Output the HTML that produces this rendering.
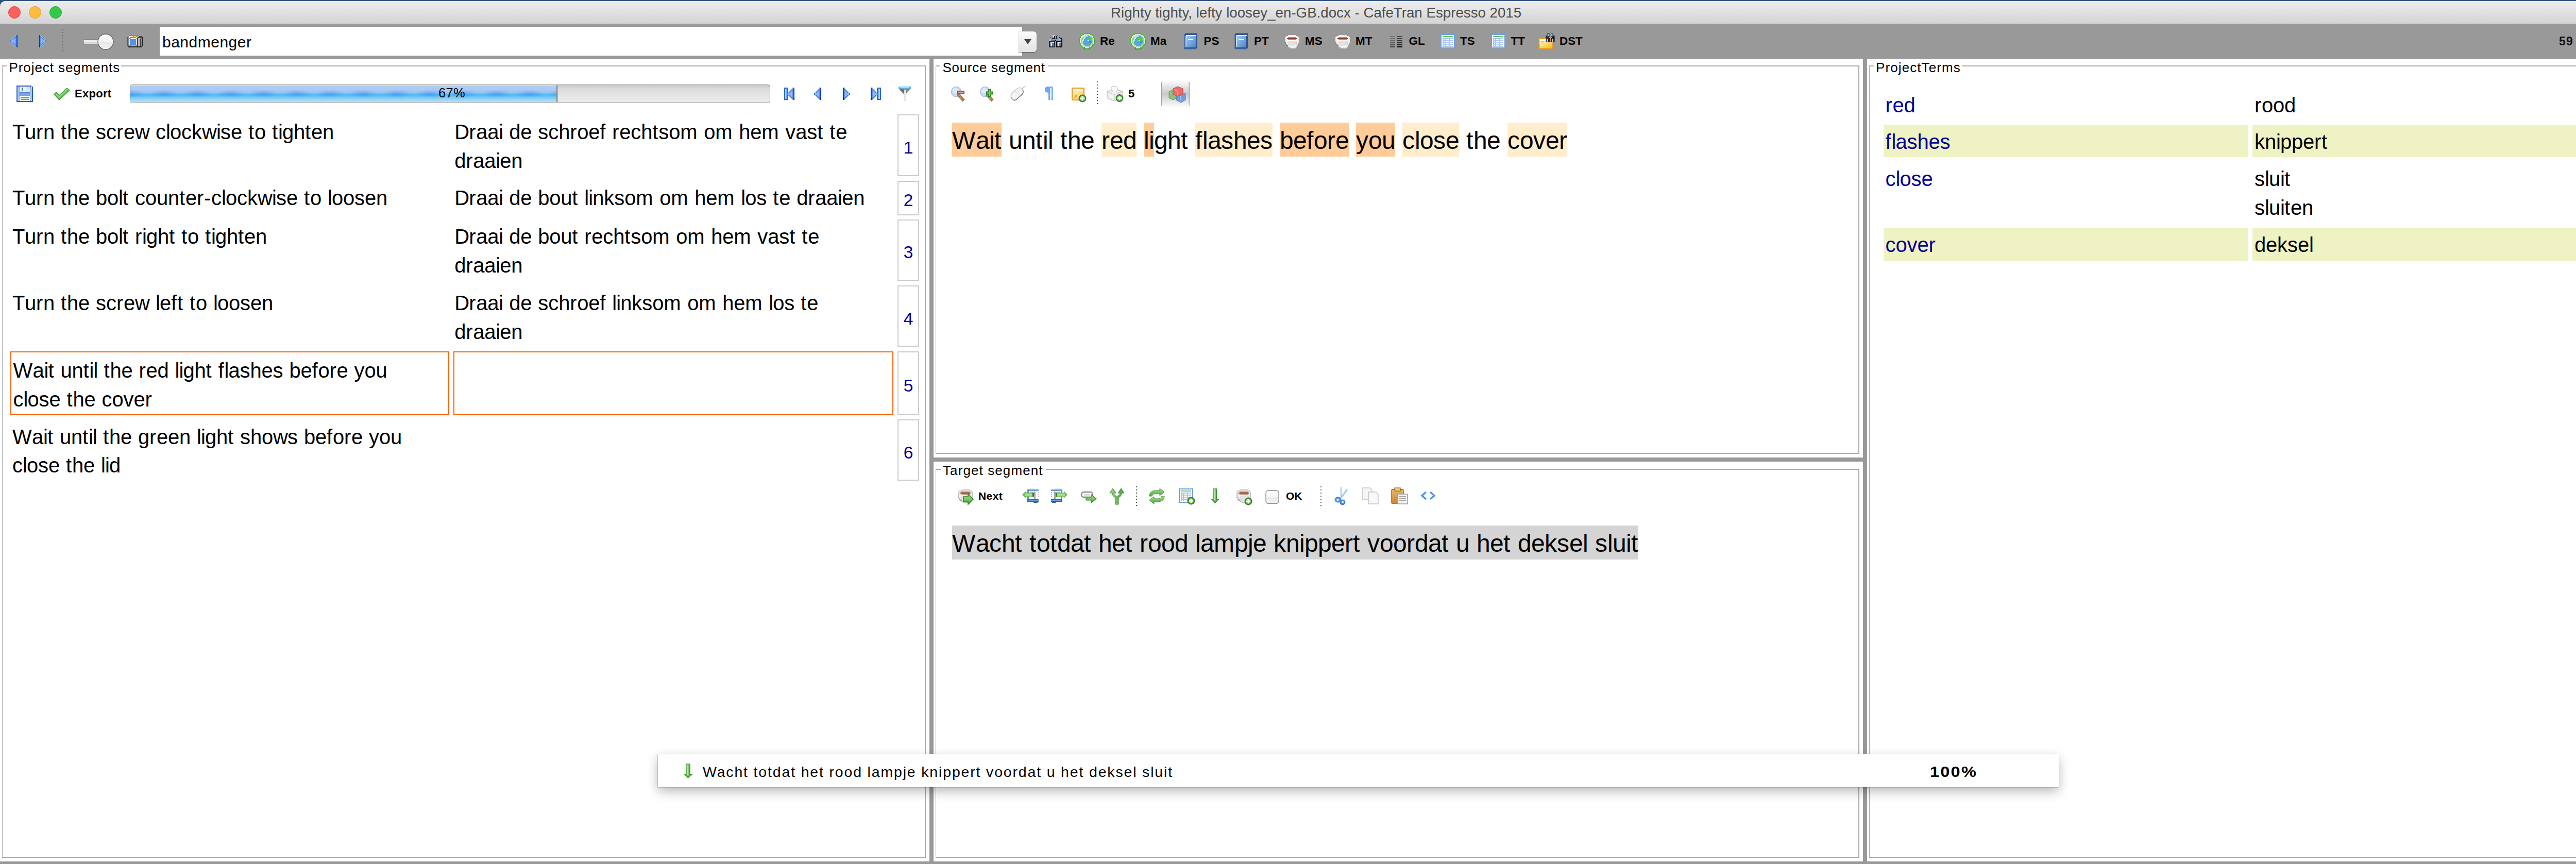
<!DOCTYPE html>
<html><head><meta charset="utf-8"><style>
html,body{margin:0;padding:0;}
body{width:5111px;height:1677px;overflow:hidden;position:relative;background:#fff;font-family:"Liberation Sans",sans-serif;color:#000;}
.t{position:absolute;white-space:pre;line-height:1;}
.t i{display:inline-block;font-style:normal;}
.r{position:absolute;}
</style></head><body>
<div class="r" style="left:0px;top:0px;width:5111px;height:12px;background:#2f4f7d;"></div>
<div class="r" style="left:0px;top:2px;width:5111px;height:44px;background:linear-gradient(#ececec,#e6e6e6 30%,#d3d3d3);border-radius:10px 10px 0 0;"></div>
<div class="r" style="left:16px;top:12px;width:22px;height:22px;border-radius:50%;background:#fc605c;border:1px solid #de4a46;"></div>
<div class="r" style="left:56px;top:12px;width:22px;height:22px;border-radius:50%;background:#fdbc40;border:1px solid #dea234;"></div>
<div class="r" style="left:96px;top:12px;width:22px;height:22px;border-radius:50%;background:#34c84a;border:1px solid #28a83a;"></div>
<div class="t" style="left:2156.0px;top:10.6px;font-size:27.7px;color:#4d4d4d;">Righty tighty, lefty loosey_en-GB.docx - CafeTran Espresso 2015</div>
<div class="r" style="left:0px;top:46px;width:5111px;height:68px;background:#999;"></div>
<div class="r" style="left:310px;top:52px;width:1674px;height:56px;background:#fff;"></div>
<div class="t" style="left:315.0px;top:67.1px;font-size:30px;letter-spacing:0.5px;">bandmenger</div>
<div class="r" style="left:1977px;top:61px;width:35px;height:40px;background:linear-gradient(#fafafa,#e4e4e4);border-radius:0 6px 6px 0;box-shadow:0 0.5px 1.5px rgba(0,0,0,.45);"></div>
<svg class="r" style="left:1988px;top:76px" width="14" height="10" viewBox="0 0 14 10"><path d="M0 0H14L7 10Z" fill="#444"/></svg>
<div class="t" style="left:2135.0px;top:69.0px;font-size:22.4px;font-weight:700;">Re</div>
<div class="t" style="left:2233.0px;top:69.0px;font-size:22.4px;font-weight:700;">Ma</div>
<div class="t" style="left:2336.5px;top:69.0px;font-size:22.4px;font-weight:700;">PS</div>
<div class="t" style="left:2434.0px;top:69.0px;font-size:22.4px;font-weight:700;">PT</div>
<div class="t" style="left:2533.0px;top:69.0px;font-size:22.4px;font-weight:700;">MS</div>
<div class="t" style="left:2631.0px;top:69.0px;font-size:22.4px;font-weight:700;">MT</div>
<div class="t" style="left:2734.6px;top:69.0px;font-size:22.4px;font-weight:700;">GL</div>
<div class="t" style="left:2834.0px;top:69.0px;font-size:22.4px;font-weight:700;">TS</div>
<div class="t" style="left:2932.5px;top:69.0px;font-size:22.4px;font-weight:700;">TT</div>
<div class="t" style="left:3027.0px;top:69.0px;font-size:22.4px;font-weight:700;">DST</div>
<div class="t" style="left:4967.0px;top:69.1px;font-size:23px;color:#111;font-weight:700;letter-spacing:1.1px;">59 | 64</div>
<div class="r" style="left:0px;top:114px;width:5111px;height:1558px;background:#fff;"></div>
<div class="r" style="left:0px;top:1672px;width:5111px;height:5px;background:#999;"></div>
<div class="r" style="left:1804px;top:114px;width:8px;height:1563px;background:#999;"></div>
<div class="r" style="left:3616px;top:114px;width:8px;height:1563px;background:#999;"></div>
<div class="r" style="left:1812px;top:888px;width:1804px;height:8px;background:#999;"></div>
<div class="r" style="left:4px;top:127px;width:1790px;height:1534px;border:2px solid #ababab;border-left-width:1px;"></div>
<div class="r" style="left:13.0px;top:126px;width:222.0px;height:4px;background:#fff;"></div>
<div class="t" style="left:17.5px;top:118.0px;font-size:26px;letter-spacing:0.92px;">Project segments</div>
<div class="r" style="left:1816px;top:127px;width:1790px;height:750px;border:2px solid #ababab;border-left-width:1px;"></div>
<div class="r" style="left:1825.0px;top:126px;width:209.0px;height:4px;background:#fff;"></div>
<div class="t" style="left:1829.5px;top:118.0px;font-size:26px;letter-spacing:0.7px;">Source segment</div>
<div class="r" style="left:1816px;top:910px;width:1790px;height:751px;border:2px solid #ababab;border-left-width:1px;"></div>
<div class="r" style="left:1825.5px;top:909px;width:204.0px;height:4px;background:#fff;"></div>
<div class="t" style="left:1830.0px;top:900.0px;font-size:26px;letter-spacing:1.1px;">Target segment</div>
<div class="r" style="left:3628px;top:127px;width:1474px;height:1534px;border:2px solid #ababab;border-left-width:1px;"></div>
<div class="r" style="left:3636.5px;top:126px;width:171.0px;height:4px;background:#fff;"></div>
<div class="t" style="left:3641.0px;top:118.0px;font-size:26px;letter-spacing:1.1px;">ProjectTerms</div>
<div class="t" style="left:145.0px;top:171.4px;font-size:22px;font-weight:700;letter-spacing:0.3px;">Export</div>
<div class="r" style="left:252px;top:164px;width:1241px;height:33.5px;border:1.5px solid #939393;border-radius:4.5px;background:linear-gradient(#c6c6c6,#dadada 20%,#e4e4e4 55%,#ececec);overflow:hidden;"><div style="position:absolute;left:0;top:0;width:828px;height:33px;background:radial-gradient(ellipse 28px 8px at 50% 52%,rgba(40,120,225,.38),rgba(40,120,225,0)) 33px 0/64.5px 100% repeat-x,linear-gradient(#d2e5fa 0,#b0cdf3 5%,#abcaf2 28%,#94c4f2 45%,#82c0f2 50%,#4ab5f3 51%,#58bef5 62%,#8ccff6 80%,#b6e2f8 100%);"></div><div style="position:absolute;left:827px;top:0;width:2.5px;height:33px;background:linear-gradient(90deg,#8a8a8a,#b5b5b5);"></div></div>
<div class="t" style="left:851.0px;top:168.4px;font-size:25.5px;letter-spacing:0.3px;">67%</div>
<div class="t" style="left:24.0px;top:235.6px;font-size:40px;"><i style="width:24px">T</i><i style="width:22px">u</i><i style="width:14px">r</i><i style="width:22px">n</i><i style="width:12px"> </i><i style="width:12px">t</i><i style="width:22px">h</i><i style="width:22px">e</i><i style="width:12px"> </i><i style="width:20px">s</i><i style="width:20px">c</i><i style="width:14px">r</i><i style="width:22px">e</i><i style="width:28px">w</i><i style="width:12px"> </i><i style="width:20px">c</i><i style="width:8px">l</i><i style="width:22px">o</i><i style="width:20px">c</i><i style="width:20px">k</i><i style="width:28px">w</i><i style="width:8px">i</i><i style="width:20px">s</i><i style="width:22px">e</i><i style="width:12px"> </i><i style="width:12px">t</i><i style="width:22px">o</i><i style="width:12px"> </i><i style="width:12px">t</i><i style="width:8px">i</i><i style="width:22px">g</i><i style="width:22px">h</i><i style="width:12px">t</i><i style="width:22px">e</i><i style="width:22px">n</i></div>
<div class="t" style="left:882.3px;top:235.6px;font-size:40px;"><i style="width:28px">D</i><i style="width:14px">r</i><i style="width:22px">a</i><i style="width:22px">a</i><i style="width:8px">i</i><i style="width:12px"> </i><i style="width:22px">d</i><i style="width:22px">e</i><i style="width:12px"> </i><i style="width:20px">s</i><i style="width:20px">c</i><i style="width:22px">h</i><i style="width:14px">r</i><i style="width:22px">o</i><i style="width:22px">e</i><i style="width:12px">f</i><i style="width:12px"> </i><i style="width:14px">r</i><i style="width:22px">e</i><i style="width:20px">c</i><i style="width:22px">h</i><i style="width:12px">t</i><i style="width:20px">s</i><i style="width:22px">o</i><i style="width:34px">m</i><i style="width:12px"> </i><i style="width:22px">o</i><i style="width:34px">m</i><i style="width:12px"> </i><i style="width:22px">h</i><i style="width:22px">e</i><i style="width:34px">m</i><i style="width:12px"> </i><i style="width:20px">v</i><i style="width:22px">a</i><i style="width:20px">s</i><i style="width:12px">t</i><i style="width:12px"> </i><i style="width:12px">t</i><i style="width:22px">e</i></div>
<div class="t" style="left:882.3px;top:291.6px;font-size:40px;"><i style="width:22px">d</i><i style="width:14px">r</i><i style="width:22px">a</i><i style="width:22px">a</i><i style="width:8px">i</i><i style="width:22px">e</i><i style="width:22px">n</i></div>
<div class="r" style="left:1742px;top:222.0px;width:38px;height:115.5px;border:2px solid #cbcbcb;"></div>
<div class="r" style="left:1742px;top:222.0px;width:42px;height:119.5px;display:flex;align-items:center;justify-content:center;"><span style="font-size:33.5px;color:#000099;position:relative;top:5px;">1</span></div>
<div class="t" style="left:24.0px;top:364.1px;font-size:40px;"><i style="width:24px">T</i><i style="width:22px">u</i><i style="width:14px">r</i><i style="width:22px">n</i><i style="width:12px"> </i><i style="width:12px">t</i><i style="width:22px">h</i><i style="width:22px">e</i><i style="width:12px"> </i><i style="width:22px">b</i><i style="width:22px">o</i><i style="width:8px">l</i><i style="width:12px">t</i><i style="width:12px"> </i><i style="width:20px">c</i><i style="width:22px">o</i><i style="width:22px">u</i><i style="width:22px">n</i><i style="width:12px">t</i><i style="width:22px">e</i><i style="width:14px">r</i><i style="width:14px">-</i><i style="width:20px">c</i><i style="width:8px">l</i><i style="width:22px">o</i><i style="width:20px">c</i><i style="width:20px">k</i><i style="width:28px">w</i><i style="width:8px">i</i><i style="width:20px">s</i><i style="width:22px">e</i><i style="width:12px"> </i><i style="width:12px">t</i><i style="width:22px">o</i><i style="width:12px"> </i><i style="width:8px">l</i><i style="width:22px">o</i><i style="width:22px">o</i><i style="width:20px">s</i><i style="width:22px">e</i><i style="width:22px">n</i></div>
<div class="t" style="left:882.3px;top:364.1px;font-size:40px;"><i style="width:28px">D</i><i style="width:14px">r</i><i style="width:22px">a</i><i style="width:22px">a</i><i style="width:8px">i</i><i style="width:12px"> </i><i style="width:22px">d</i><i style="width:22px">e</i><i style="width:12px"> </i><i style="width:22px">b</i><i style="width:22px">o</i><i style="width:22px">u</i><i style="width:12px">t</i><i style="width:12px"> </i><i style="width:8px">l</i><i style="width:8px">i</i><i style="width:22px">n</i><i style="width:20px">k</i><i style="width:20px">s</i><i style="width:22px">o</i><i style="width:34px">m</i><i style="width:12px"> </i><i style="width:22px">o</i><i style="width:34px">m</i><i style="width:12px"> </i><i style="width:22px">h</i><i style="width:22px">e</i><i style="width:34px">m</i><i style="width:12px"> </i><i style="width:8px">l</i><i style="width:22px">o</i><i style="width:20px">s</i><i style="width:12px"> </i><i style="width:12px">t</i><i style="width:22px">e</i><i style="width:12px"> </i><i style="width:22px">d</i><i style="width:14px">r</i><i style="width:22px">a</i><i style="width:22px">a</i><i style="width:8px">i</i><i style="width:22px">e</i><i style="width:22px">n</i></div>
<div class="r" style="left:1742px;top:350.5px;width:38px;height:63.0px;border:2px solid #cbcbcb;"></div>
<div class="r" style="left:1742px;top:350.5px;width:42px;height:67.0px;display:flex;align-items:center;justify-content:center;"><span style="font-size:33.5px;color:#000099;position:relative;top:5px;">2</span></div>
<div class="t" style="left:24.0px;top:439.2px;font-size:40px;"><i style="width:24px">T</i><i style="width:22px">u</i><i style="width:14px">r</i><i style="width:22px">n</i><i style="width:12px"> </i><i style="width:12px">t</i><i style="width:22px">h</i><i style="width:22px">e</i><i style="width:12px"> </i><i style="width:22px">b</i><i style="width:22px">o</i><i style="width:8px">l</i><i style="width:12px">t</i><i style="width:12px"> </i><i style="width:14px">r</i><i style="width:8px">i</i><i style="width:22px">g</i><i style="width:22px">h</i><i style="width:12px">t</i><i style="width:12px"> </i><i style="width:12px">t</i><i style="width:22px">o</i><i style="width:12px"> </i><i style="width:12px">t</i><i style="width:8px">i</i><i style="width:22px">g</i><i style="width:22px">h</i><i style="width:12px">t</i><i style="width:22px">e</i><i style="width:22px">n</i></div>
<div class="t" style="left:882.3px;top:439.2px;font-size:40px;"><i style="width:28px">D</i><i style="width:14px">r</i><i style="width:22px">a</i><i style="width:22px">a</i><i style="width:8px">i</i><i style="width:12px"> </i><i style="width:22px">d</i><i style="width:22px">e</i><i style="width:12px"> </i><i style="width:22px">b</i><i style="width:22px">o</i><i style="width:22px">u</i><i style="width:12px">t</i><i style="width:12px"> </i><i style="width:14px">r</i><i style="width:22px">e</i><i style="width:20px">c</i><i style="width:22px">h</i><i style="width:12px">t</i><i style="width:20px">s</i><i style="width:22px">o</i><i style="width:34px">m</i><i style="width:12px"> </i><i style="width:22px">o</i><i style="width:34px">m</i><i style="width:12px"> </i><i style="width:22px">h</i><i style="width:22px">e</i><i style="width:34px">m</i><i style="width:12px"> </i><i style="width:20px">v</i><i style="width:22px">a</i><i style="width:20px">s</i><i style="width:12px">t</i><i style="width:12px"> </i><i style="width:12px">t</i><i style="width:22px">e</i></div>
<div class="t" style="left:882.3px;top:495.2px;font-size:40px;"><i style="width:22px">d</i><i style="width:14px">r</i><i style="width:22px">a</i><i style="width:22px">a</i><i style="width:8px">i</i><i style="width:22px">e</i><i style="width:22px">n</i></div>
<div class="r" style="left:1742px;top:425.6px;width:38px;height:115.0px;border:2px solid #cbcbcb;"></div>
<div class="r" style="left:1742px;top:425.6px;width:42px;height:119.0px;display:flex;align-items:center;justify-content:center;"><span style="font-size:33.5px;color:#000099;position:relative;top:5px;">3</span></div>
<div class="t" style="left:24.0px;top:567.9px;font-size:40px;"><i style="width:24px">T</i><i style="width:22px">u</i><i style="width:14px">r</i><i style="width:22px">n</i><i style="width:12px"> </i><i style="width:12px">t</i><i style="width:22px">h</i><i style="width:22px">e</i><i style="width:12px"> </i><i style="width:20px">s</i><i style="width:20px">c</i><i style="width:14px">r</i><i style="width:22px">e</i><i style="width:28px">w</i><i style="width:12px"> </i><i style="width:8px">l</i><i style="width:22px">e</i><i style="width:12px">f</i><i style="width:12px">t</i><i style="width:12px"> </i><i style="width:12px">t</i><i style="width:22px">o</i><i style="width:12px"> </i><i style="width:8px">l</i><i style="width:22px">o</i><i style="width:22px">o</i><i style="width:20px">s</i><i style="width:22px">e</i><i style="width:22px">n</i></div>
<div class="t" style="left:882.3px;top:567.9px;font-size:40px;"><i style="width:28px">D</i><i style="width:14px">r</i><i style="width:22px">a</i><i style="width:22px">a</i><i style="width:8px">i</i><i style="width:12px"> </i><i style="width:22px">d</i><i style="width:22px">e</i><i style="width:12px"> </i><i style="width:20px">s</i><i style="width:20px">c</i><i style="width:22px">h</i><i style="width:14px">r</i><i style="width:22px">o</i><i style="width:22px">e</i><i style="width:12px">f</i><i style="width:12px"> </i><i style="width:8px">l</i><i style="width:8px">i</i><i style="width:22px">n</i><i style="width:20px">k</i><i style="width:20px">s</i><i style="width:22px">o</i><i style="width:34px">m</i><i style="width:12px"> </i><i style="width:22px">o</i><i style="width:34px">m</i><i style="width:12px"> </i><i style="width:22px">h</i><i style="width:22px">e</i><i style="width:34px">m</i><i style="width:12px"> </i><i style="width:8px">l</i><i style="width:22px">o</i><i style="width:20px">s</i><i style="width:12px"> </i><i style="width:12px">t</i><i style="width:22px">e</i></div>
<div class="t" style="left:882.3px;top:623.9px;font-size:40px;"><i style="width:22px">d</i><i style="width:14px">r</i><i style="width:22px">a</i><i style="width:22px">a</i><i style="width:8px">i</i><i style="width:22px">e</i><i style="width:22px">n</i></div>
<div class="r" style="left:1742px;top:554.3px;width:38px;height:115.0px;border:2px solid #cbcbcb;"></div>
<div class="r" style="left:1742px;top:554.3px;width:42px;height:119.0px;display:flex;align-items:center;justify-content:center;"><span style="font-size:33.5px;color:#000099;position:relative;top:5px;">4</span></div>
<div class="t" style="left:25.6px;top:699.1px;font-size:40px;"><i style="width:38px">W</i><i style="width:22px">a</i><i style="width:8px">i</i><i style="width:12px">t</i><i style="width:12px"> </i><i style="width:22px">u</i><i style="width:22px">n</i><i style="width:12px">t</i><i style="width:8px">i</i><i style="width:8px">l</i><i style="width:12px"> </i><i style="width:12px">t</i><i style="width:22px">h</i><i style="width:22px">e</i><i style="width:12px"> </i><i style="width:14px">r</i><i style="width:22px">e</i><i style="width:22px">d</i><i style="width:12px"> </i><i style="width:8px">l</i><i style="width:8px">i</i><i style="width:22px">g</i><i style="width:22px">h</i><i style="width:12px">t</i><i style="width:12px"> </i><i style="width:12px">f</i><i style="width:8px">l</i><i style="width:22px">a</i><i style="width:20px">s</i><i style="width:22px">h</i><i style="width:22px">e</i><i style="width:20px">s</i><i style="width:12px"> </i><i style="width:22px">b</i><i style="width:22px">e</i><i style="width:12px">f</i><i style="width:22px">o</i><i style="width:14px">r</i><i style="width:22px">e</i><i style="width:12px"> </i><i style="width:20px">y</i><i style="width:22px">o</i><i style="width:22px">u</i></div>
<div class="t" style="left:25.6px;top:754.6px;font-size:40px;"><i style="width:20px">c</i><i style="width:8px">l</i><i style="width:22px">o</i><i style="width:20px">s</i><i style="width:22px">e</i><i style="width:12px"> </i><i style="width:12px">t</i><i style="width:22px">h</i><i style="width:22px">e</i><i style="width:12px"> </i><i style="width:20px">c</i><i style="width:22px">o</i><i style="width:20px">v</i><i style="width:22px">e</i><i style="width:14px">r</i></div>
<div class="r" style="left:1742px;top:682.0px;width:38px;height:119.4px;border:2px solid #cbcbcb;"></div>
<div class="r" style="left:1742px;top:682.0px;width:42px;height:123.4px;display:flex;align-items:center;justify-content:center;"><span style="font-size:33.5px;color:#000099;position:relative;top:5px;">5</span></div>
<div class="r" style="left:20px;top:682px;width:852px;height:123.5px;border:2px solid #ff6209;box-sizing:border-box;"></div>
<div class="r" style="left:880px;top:682px;width:854px;height:123.5px;border:2px solid #ff6209;box-sizing:border-box;"></div>
<div class="t" style="left:24.0px;top:827.9px;font-size:40px;"><i style="width:38px">W</i><i style="width:22px">a</i><i style="width:8px">i</i><i style="width:12px">t</i><i style="width:12px"> </i><i style="width:22px">u</i><i style="width:22px">n</i><i style="width:12px">t</i><i style="width:8px">i</i><i style="width:8px">l</i><i style="width:12px"> </i><i style="width:12px">t</i><i style="width:22px">h</i><i style="width:22px">e</i><i style="width:12px"> </i><i style="width:22px">g</i><i style="width:14px">r</i><i style="width:22px">e</i><i style="width:22px">e</i><i style="width:22px">n</i><i style="width:12px"> </i><i style="width:8px">l</i><i style="width:8px">i</i><i style="width:22px">g</i><i style="width:22px">h</i><i style="width:12px">t</i><i style="width:12px"> </i><i style="width:20px">s</i><i style="width:22px">h</i><i style="width:22px">o</i><i style="width:28px">w</i><i style="width:20px">s</i><i style="width:12px"> </i><i style="width:22px">b</i><i style="width:22px">e</i><i style="width:12px">f</i><i style="width:22px">o</i><i style="width:14px">r</i><i style="width:22px">e</i><i style="width:12px"> </i><i style="width:20px">y</i><i style="width:22px">o</i><i style="width:22px">u</i></div>
<div class="t" style="left:24.0px;top:883.4px;font-size:40px;"><i style="width:20px">c</i><i style="width:8px">l</i><i style="width:22px">o</i><i style="width:20px">s</i><i style="width:22px">e</i><i style="width:12px"> </i><i style="width:12px">t</i><i style="width:22px">h</i><i style="width:22px">e</i><i style="width:12px"> </i><i style="width:8px">l</i><i style="width:8px">i</i><i style="width:22px">d</i></div>
<div class="r" style="left:1742px;top:814.3px;width:38px;height:115.0px;border:2px solid #cbcbcb;"></div>
<div class="r" style="left:1742px;top:814.3px;width:42px;height:119.0px;display:flex;align-items:center;justify-content:center;"><span style="font-size:33.5px;color:#000099;position:relative;top:5px;">6</span></div>
<div class="r" style="left:1848px;top:238px;width:96px;height:66px;background:#ffcc99;"></div>
<div class="r" style="left:2138px;top:238px;width:68px;height:66px;background:#ffedcc;"></div>
<div class="r" style="left:2220px;top:238px;width:20px;height:66px;background:#ffcc99;"></div>
<div class="r" style="left:2320px;top:238px;width:150px;height:66px;background:#ffedcc;"></div>
<div class="r" style="left:2484px;top:238px;width:134px;height:66px;background:#ffcc99;"></div>
<div class="r" style="left:2632px;top:238px;width:76px;height:66px;background:#ffcc99;"></div>
<div class="r" style="left:2722px;top:238px;width:110px;height:66px;background:#ffedcc;"></div>
<div class="r" style="left:2926px;top:238px;width:116px;height:66px;background:#ffedcc;"></div>
<div class="t" style="left:1848.0px;top:249.4px;font-size:48px;"><i style="width:46px">W</i><i style="width:26px">a</i><i style="width:10px">i</i><i style="width:14px">t</i><i style="width:14px"> </i><i style="width:26px">u</i><i style="width:26px">n</i><i style="width:14px">t</i><i style="width:10px">i</i><i style="width:10px">l</i><i style="width:14px"> </i><i style="width:14px">t</i><i style="width:26px">h</i><i style="width:26px">e</i><i style="width:14px"> </i><i style="width:16px">r</i><i style="width:26px">e</i><i style="width:26px">d</i><i style="width:14px"> </i><i style="width:10px">l</i><i style="width:10px">i</i><i style="width:26px">g</i><i style="width:26px">h</i><i style="width:14px">t</i><i style="width:14px"> </i><i style="width:14px">f</i><i style="width:10px">l</i><i style="width:26px">a</i><i style="width:24px">s</i><i style="width:26px">h</i><i style="width:26px">e</i><i style="width:24px">s</i><i style="width:14px"> </i><i style="width:26px">b</i><i style="width:26px">e</i><i style="width:14px">f</i><i style="width:26px">o</i><i style="width:16px">r</i><i style="width:26px">e</i><i style="width:14px"> </i><i style="width:24px">y</i><i style="width:26px">o</i><i style="width:26px">u</i><i style="width:14px"> </i><i style="width:24px">c</i><i style="width:10px">l</i><i style="width:26px">o</i><i style="width:24px">s</i><i style="width:26px">e</i><i style="width:14px"> </i><i style="width:14px">t</i><i style="width:26px">h</i><i style="width:26px">e</i><i style="width:14px"> </i><i style="width:24px">c</i><i style="width:26px">o</i><i style="width:24px">v</i><i style="width:26px">e</i><i style="width:16px">r</i></div>
<div class="t" style="left:2190.0px;top:171.0px;font-size:22px;font-weight:700;">5</div>
<div class="r" style="left:2254px;top:155px;width:55px;height:53px;background:linear-gradient(90deg,#b0b0b0,#dedede 15%,#e4e4e4 50%,#dedede 85%,#b0b0b0);"></div>
<div class="t" style="left:1899.0px;top:952.2px;font-size:21px;font-weight:700;letter-spacing:0.4px;">Next</div>
<div class="t" style="left:2496.0px;top:952.2px;font-size:21px;font-weight:700;">OK</div>
<div class="r" style="left:1848px;top:1020px;width:1332px;height:66px;background:#d4d4d4;"></div>
<div class="t" style="left:1848.0px;top:1031.4px;font-size:48px;"><i style="width:46px">W</i><i style="width:26px">a</i><i style="width:24px">c</i><i style="width:26px">h</i><i style="width:14px">t</i><i style="width:14px"> </i><i style="width:14px">t</i><i style="width:26px">o</i><i style="width:14px">t</i><i style="width:26px">d</i><i style="width:26px">a</i><i style="width:14px">t</i><i style="width:14px"> </i><i style="width:26px">h</i><i style="width:26px">e</i><i style="width:14px">t</i><i style="width:14px"> </i><i style="width:16px">r</i><i style="width:26px">o</i><i style="width:26px">o</i><i style="width:26px">d</i><i style="width:14px"> </i><i style="width:10px">l</i><i style="width:26px">a</i><i style="width:40px">m</i><i style="width:26px">p</i><i style="width:10px">j</i><i style="width:26px">e</i><i style="width:14px"> </i><i style="width:24px">k</i><i style="width:26px">n</i><i style="width:10px">i</i><i style="width:26px">p</i><i style="width:26px">p</i><i style="width:26px">e</i><i style="width:16px">r</i><i style="width:14px">t</i><i style="width:14px"> </i><i style="width:24px">v</i><i style="width:26px">o</i><i style="width:26px">o</i><i style="width:16px">r</i><i style="width:26px">d</i><i style="width:26px">a</i><i style="width:14px">t</i><i style="width:14px"> </i><i style="width:26px">u</i><i style="width:14px"> </i><i style="width:26px">h</i><i style="width:26px">e</i><i style="width:14px">t</i><i style="width:14px"> </i><i style="width:26px">d</i><i style="width:26px">e</i><i style="width:24px">k</i><i style="width:24px">s</i><i style="width:26px">e</i><i style="width:10px">l</i><i style="width:14px"> </i><i style="width:24px">s</i><i style="width:10px">l</i><i style="width:26px">u</i><i style="width:10px">i</i><i style="width:14px">t</i></div>
<div class="t" style="left:3659.5px;top:183.6px;font-size:40px;color:#000099;"><i style="width:14px">r</i><i style="width:22px">e</i><i style="width:22px">d</i></div>
<div class="t" style="left:4376.0px;top:183.6px;font-size:40px;"><i style="width:14px">r</i><i style="width:22px">o</i><i style="width:22px">o</i><i style="width:22px">d</i></div>
<div class="r" style="left:3656px;top:241.7px;width:707.5px;height:63.5px;background:#eff2c2;"></div>
<div class="r" style="left:4372px;top:241.7px;width:708px;height:63.5px;background:#eff2c2;"></div>
<div class="t" style="left:3659.5px;top:254.8px;font-size:40px;color:#000099;"><i style="width:12px">f</i><i style="width:8px">l</i><i style="width:22px">a</i><i style="width:20px">s</i><i style="width:22px">h</i><i style="width:22px">e</i><i style="width:20px">s</i></div>
<div class="t" style="left:4376.0px;top:254.8px;font-size:40px;"><i style="width:20px">k</i><i style="width:22px">n</i><i style="width:8px">i</i><i style="width:22px">p</i><i style="width:22px">p</i><i style="width:22px">e</i><i style="width:14px">r</i><i style="width:12px">t</i></div>
<div class="t" style="left:3659.5px;top:327.1px;font-size:40px;color:#000099;"><i style="width:20px">c</i><i style="width:8px">l</i><i style="width:22px">o</i><i style="width:20px">s</i><i style="width:22px">e</i></div>
<div class="t" style="left:4376.0px;top:327.1px;font-size:40px;"><i style="width:20px">s</i><i style="width:8px">l</i><i style="width:22px">u</i><i style="width:8px">i</i><i style="width:12px">t</i></div>
<div class="t" style="left:4376.0px;top:383.1px;font-size:40px;"><i style="width:20px">s</i><i style="width:8px">l</i><i style="width:22px">u</i><i style="width:8px">i</i><i style="width:12px">t</i><i style="width:22px">e</i><i style="width:22px">n</i></div>
<div class="r" style="left:3656px;top:442px;width:707.5px;height:63.5px;background:#eff2c2;"></div>
<div class="r" style="left:4372px;top:442px;width:708px;height:63.5px;background:#eff2c2;"></div>
<div class="t" style="left:3659.5px;top:455.1px;font-size:40px;color:#000099;"><i style="width:20px">c</i><i style="width:22px">o</i><i style="width:20px">v</i><i style="width:22px">e</i><i style="width:14px">r</i></div>
<div class="t" style="left:4376.0px;top:455.1px;font-size:40px;"><i style="width:22px">d</i><i style="width:22px">e</i><i style="width:20px">k</i><i style="width:20px">s</i><i style="width:22px">e</i><i style="width:8px">l</i></div>
<div class="r" style="left:1277px;top:1463.5px;width:2719px;height:64.5px;background:#fff;box-shadow:0 0 0 0.7px rgba(0,0,0,.22),0 8px 22px rgba(0,0,0,.28);"></div>
<div class="t" style="left:1364.0px;top:1483.5px;font-size:28.5px;letter-spacing:1.83px;">Wacht totdat het rood lampje knippert voordat u het deksel sluit</div>
<div class="t" style="left:3746.0px;top:1484.0px;font-size:29px;font-weight:700;letter-spacing:2px;transform:scaleX(1.12);transform-origin:0 0;">100%</div>
<svg width="0" height="0" style="position:absolute"><defs>
<linearGradient id="gBlueTri" x1="0" y1="0" x2="1" y2="0"><stop offset="0" stop-color="#a9c8f5"/><stop offset="1" stop-color="#5b8ee6"/></linearGradient>
<linearGradient id="gBook" x1="0" y1="0" x2="1" y2="1"><stop offset="0" stop-color="#a9cdee"/><stop offset="1" stop-color="#4a86c8"/></linearGradient>
<radialGradient id="gGlobe" cx="0.4" cy="0.35" r="0.7"><stop offset="0" stop-color="#d8f5c8"/><stop offset="0.5" stop-color="#6fd06a"/><stop offset="1" stop-color="#3aa83a"/></radialGradient>
<linearGradient id="gKnob" x1="0" y1="0" x2="0" y2="1"><stop offset="0" stop-color="#ffffff"/><stop offset="0.5" stop-color="#f4f4f4"/><stop offset="0.55" stop-color="#e9e9e9"/><stop offset="1" stop-color="#f2f2f2"/></linearGradient>
<linearGradient id="gSticky" x1="0" y1="0" x2="1" y2="1"><stop offset="0" stop-color="#fff6c8"/><stop offset="1" stop-color="#f5cf3c"/></linearGradient>
<linearGradient id="gFolder" x1="0" y1="0" x2="1" y2="1"><stop offset="0" stop-color="#fff3b0"/><stop offset="1" stop-color="#f0c000"/></linearGradient>
<linearGradient id="gGreenArrow" x1="0" y1="0" x2="0" y2="1"><stop offset="0" stop-color="#a8dc98"/><stop offset="1" stop-color="#4ea83c"/></linearGradient>
<linearGradient id="gGreenV" x1="0" y1="0" x2="1" y2="0"><stop offset="0" stop-color="#9fd58e"/><stop offset="1" stop-color="#4a9e3a"/></linearGradient>
<linearGradient id="gClip" x1="0" y1="0" x2="0" y2="1"><stop offset="0" stop-color="#e7b86a"/><stop offset="1" stop-color="#c98634"/></linearGradient>
<linearGradient id="gCheckbox" x1="0" y1="0" x2="0" y2="1"><stop offset="0" stop-color="#ffffff"/><stop offset="0.5" stop-color="#f6f6f6"/><stop offset="0.52" stop-color="#ebebeb"/><stop offset="1" stop-color="#f3f3f3"/></linearGradient>
<linearGradient id="gCubeBtn" x1="0" y1="0" x2="0" y2="1"><stop offset="0" stop-color="#ffffff"/><stop offset="0.5" stop-color="#c9c9c9"/><stop offset="1" stop-color="#ffffff"/></linearGradient>
</defs></svg>
<svg class="r" style="left:20px;top:68px" width="14" height="24" viewBox="0 0 7 12" shape-rendering="crispEdges"><rect x="5" y="0" width="1" height="1" fill="#94b7ef"/><rect x="6" y="0" width="1" height="1" fill="#0b3cc9"/><rect x="4" y="1" width="1" height="1" fill="#94b7ef"/><rect x="5" y="1" width="1" height="1" fill="#4382e4"/><rect x="6" y="1" width="1" height="1" fill="#0b3cc9"/><rect x="3" y="2" width="1" height="1" fill="#94b7ef"/><rect x="4" y="2" width="1" height="1" fill="#4382e4"/><rect x="5" y="2" width="1" height="1" fill="#5b95ea"/><rect x="6" y="2" width="1" height="1" fill="#0b3cc9"/><rect x="2" y="3" width="1" height="1" fill="#94b7ef"/><rect x="3" y="3" width="1" height="1" fill="#4382e4"/><rect x="4" y="3" width="1" height="1" fill="#8fb3ee"/><rect x="5" y="3" width="1" height="1" fill="#5b95ea"/><rect x="6" y="3" width="1" height="1" fill="#0b3cc9"/><rect x="1" y="4" width="1" height="1" fill="#94b7ef"/><rect x="2" y="4" width="1" height="1" fill="#4382e4"/><rect x="3" y="4" width="2" height="1" fill="#8fb3ee"/><rect x="5" y="4" width="1" height="1" fill="#5b95ea"/><rect x="6" y="4" width="1" height="1" fill="#0b3cc9"/><rect x="0" y="5" width="1" height="1" fill="#4382e4"/><rect x="1" y="5" width="4" height="1" fill="#8fb3ee"/><rect x="5" y="5" width="1" height="1" fill="#5b95ea"/><rect x="6" y="5" width="1" height="1" fill="#0b3cc9"/><rect x="0" y="6" width="1" height="1" fill="#4382e4"/><rect x="1" y="6" width="4" height="1" fill="#8fb3ee"/><rect x="5" y="6" width="1" height="1" fill="#5b95ea"/><rect x="6" y="6" width="1" height="1" fill="#0b3cc9"/><rect x="1" y="7" width="1" height="1" fill="#94b7ef"/><rect x="2" y="7" width="1" height="1" fill="#4382e4"/><rect x="3" y="7" width="2" height="1" fill="#8fb3ee"/><rect x="5" y="7" width="1" height="1" fill="#5b95ea"/><rect x="6" y="7" width="1" height="1" fill="#0b3cc9"/><rect x="2" y="8" width="1" height="1" fill="#94b7ef"/><rect x="3" y="8" width="1" height="1" fill="#4382e4"/><rect x="4" y="8" width="1" height="1" fill="#8fb3ee"/><rect x="5" y="8" width="1" height="1" fill="#5b95ea"/><rect x="6" y="8" width="1" height="1" fill="#0b3cc9"/><rect x="3" y="9" width="1" height="1" fill="#94b7ef"/><rect x="4" y="9" width="1" height="1" fill="#4382e4"/><rect x="5" y="9" width="1" height="1" fill="#5b95ea"/><rect x="6" y="9" width="1" height="1" fill="#0b3cc9"/><rect x="4" y="10" width="1" height="1" fill="#94b7ef"/><rect x="5" y="10" width="1" height="1" fill="#4382e4"/><rect x="6" y="10" width="1" height="1" fill="#0022b2"/><rect x="5" y="11" width="1" height="1" fill="#94b7ef"/><rect x="6" y="11" width="1" height="1" fill="#0022b2"/></svg>
<svg class="r" style="left:76px;top:68px" width="14" height="24" viewBox="0 0 7 12" shape-rendering="crispEdges"><rect x="0" y="0" width="1" height="1" fill="#0b3cc9"/><rect x="1" y="0" width="1" height="1" fill="#94b7ef"/><rect x="0" y="1" width="1" height="1" fill="#0b3cc9"/><rect x="1" y="1" width="1" height="1" fill="#4382e4"/><rect x="2" y="1" width="1" height="1" fill="#94b7ef"/><rect x="0" y="2" width="1" height="1" fill="#0b3cc9"/><rect x="1" y="2" width="1" height="1" fill="#5b95ea"/><rect x="2" y="2" width="1" height="1" fill="#4382e4"/><rect x="3" y="2" width="1" height="1" fill="#94b7ef"/><rect x="0" y="3" width="1" height="1" fill="#0b3cc9"/><rect x="1" y="3" width="1" height="1" fill="#5b95ea"/><rect x="2" y="3" width="1" height="1" fill="#8fb3ee"/><rect x="3" y="3" width="1" height="1" fill="#4382e4"/><rect x="4" y="3" width="1" height="1" fill="#94b7ef"/><rect x="0" y="4" width="1" height="1" fill="#0b3cc9"/><rect x="1" y="4" width="1" height="1" fill="#5b95ea"/><rect x="2" y="4" width="2" height="1" fill="#8fb3ee"/><rect x="4" y="4" width="1" height="1" fill="#4382e4"/><rect x="5" y="4" width="1" height="1" fill="#94b7ef"/><rect x="0" y="5" width="1" height="1" fill="#0b3cc9"/><rect x="1" y="5" width="1" height="1" fill="#5b95ea"/><rect x="2" y="5" width="4" height="1" fill="#8fb3ee"/><rect x="6" y="5" width="1" height="1" fill="#4382e4"/><rect x="0" y="6" width="1" height="1" fill="#0b3cc9"/><rect x="1" y="6" width="1" height="1" fill="#5b95ea"/><rect x="2" y="6" width="4" height="1" fill="#8fb3ee"/><rect x="6" y="6" width="1" height="1" fill="#4382e4"/><rect x="0" y="7" width="1" height="1" fill="#0b3cc9"/><rect x="1" y="7" width="1" height="1" fill="#5b95ea"/><rect x="2" y="7" width="2" height="1" fill="#8fb3ee"/><rect x="4" y="7" width="1" height="1" fill="#4382e4"/><rect x="5" y="7" width="1" height="1" fill="#94b7ef"/><rect x="0" y="8" width="1" height="1" fill="#0b3cc9"/><rect x="1" y="8" width="1" height="1" fill="#5b95ea"/><rect x="2" y="8" width="1" height="1" fill="#8fb3ee"/><rect x="3" y="8" width="1" height="1" fill="#4382e4"/><rect x="4" y="8" width="1" height="1" fill="#94b7ef"/><rect x="0" y="9" width="1" height="1" fill="#0b3cc9"/><rect x="1" y="9" width="1" height="1" fill="#5b95ea"/><rect x="2" y="9" width="1" height="1" fill="#4382e4"/><rect x="3" y="9" width="1" height="1" fill="#94b7ef"/><rect x="0" y="10" width="1" height="1" fill="#0022b2"/><rect x="1" y="10" width="1" height="1" fill="#4382e4"/><rect x="2" y="10" width="1" height="1" fill="#94b7ef"/><rect x="0" y="11" width="1" height="1" fill="#0022b2"/><rect x="1" y="11" width="1" height="1" fill="#94b7ef"/></svg>
<svg class="r" style="left:121px;top:56px;overflow:visible" width="2" height="45" viewBox="0 0 2 45"><rect x="0" y="0" width="2" height="2" fill="#6e6e6e"/><rect x="0" y="6" width="2" height="2" fill="#6e6e6e"/><rect x="0" y="12" width="2" height="2" fill="#6e6e6e"/><rect x="0" y="18" width="2" height="2" fill="#6e6e6e"/><rect x="0" y="24" width="2" height="2" fill="#6e6e6e"/><rect x="0" y="30" width="2" height="2" fill="#6e6e6e"/><rect x="0" y="36" width="2" height="2" fill="#6e6e6e"/><rect x="0" y="42" width="2" height="2" fill="#6e6e6e"/></svg>
<svg class="r" style="left:160px;top:64px;overflow:visible" width="64" height="36" viewBox="0 0 64 36"><rect x="2" y="12.5" width="30" height="9" rx="2" fill="#d8d8d8" stroke="#7d7d7d" stroke-width="1"/><rect x="3" y="14" width="28" height="3" fill="#eeeeee"/><circle cx="45" cy="17" r="15" fill="url(#gKnob)" stroke="#5f5f5f" stroke-width="1.3"/></svg>
<svg class="r" style="left:246px;top:68px" width="32" height="24" viewBox="0 0 16 12" shape-rendering="crispEdges"><rect x="2" y="0" width="8" height="1" fill="#8a8a8a"/><rect x="2" y="1" width="4" height="1" fill="#eeeeee"/><rect x="6" y="1" width="1" height="1" fill="#b89a48"/><rect x="7" y="1" width="2" height="1" fill="#ffd43c"/><rect x="9" y="1" width="1" height="1" fill="#b89a48"/><rect x="12" y="1" width="3" height="1" fill="#474747"/><rect x="0" y="2" width="1" height="1" fill="#5c5c5c"/><rect x="1" y="2" width="1" height="1" fill="#8a8a8a"/><rect x="2" y="2" width="1" height="1" fill="#eeeeee"/><rect x="3" y="2" width="5" height="1" fill="#8a8a8a"/><rect x="8" y="2" width="1" height="1" fill="#7f9fc8"/><rect x="9" y="2" width="1" height="1" fill="#eeeeee"/><rect x="10" y="2" width="1" height="1" fill="#8a8a8a"/><rect x="11" y="2" width="4" height="1" fill="#474747"/><rect x="15" y="2" width="1" height="1" fill="#232323"/><rect x="0" y="3" width="1" height="1" fill="#5c5c5c"/><rect x="1" y="3" width="2" height="1" fill="#8a8a8a"/><rect x="3" y="3" width="1" height="1" fill="#b4b4b4"/><rect x="4" y="3" width="5" height="1" fill="#eeeeee"/><rect x="9" y="3" width="1" height="1" fill="#b4b4b4"/><rect x="10" y="3" width="1" height="1" fill="#474747"/><rect x="11" y="3" width="2" height="1" fill="#b4b4b4"/><rect x="13" y="3" width="2" height="1" fill="#8a8a8a"/><rect x="15" y="3" width="1" height="1" fill="#232323"/><rect x="0" y="4" width="1" height="1" fill="#5c5c5c"/><rect x="1" y="4" width="1" height="1" fill="#8a8a8a"/><rect x="2" y="4" width="1" height="1" fill="#dcdcdc"/><rect x="3" y="4" width="6" height="1" fill="#5592e0"/><rect x="9" y="4" width="1" height="1" fill="#dcdcdc"/><rect x="10" y="4" width="1" height="1" fill="#474747"/><rect x="11" y="4" width="2" height="1" fill="#b4b4b4"/><rect x="13" y="4" width="1" height="1" fill="#474747"/><rect x="14" y="4" width="1" height="1" fill="#8a8a8a"/><rect x="15" y="4" width="1" height="1" fill="#232323"/><rect x="0" y="5" width="1" height="1" fill="#5c5c5c"/><rect x="1" y="5" width="1" height="1" fill="#8a8a8a"/><rect x="2" y="5" width="1" height="1" fill="#dcdcdc"/><rect x="3" y="5" width="6" height="1" fill="#5592e0"/><rect x="9" y="5" width="1" height="1" fill="#dcdcdc"/><rect x="10" y="5" width="1" height="1" fill="#474747"/><rect x="11" y="5" width="2" height="1" fill="#b4b4b4"/><rect x="13" y="5" width="1" height="1" fill="#474747"/><rect x="14" y="5" width="1" height="1" fill="#8a8a8a"/><rect x="15" y="5" width="1" height="1" fill="#232323"/><rect x="0" y="6" width="1" height="1" fill="#5c5c5c"/><rect x="1" y="6" width="1" height="1" fill="#8a8a8a"/><rect x="2" y="6" width="1" height="1" fill="#dcdcdc"/><rect x="3" y="6" width="6" height="1" fill="#5592e0"/><rect x="9" y="6" width="1" height="1" fill="#dcdcdc"/><rect x="10" y="6" width="1" height="1" fill="#474747"/><rect x="11" y="6" width="2" height="1" fill="#b4b4b4"/><rect x="13" y="6" width="1" height="1" fill="#474747"/><rect x="14" y="6" width="1" height="1" fill="#8a8a8a"/><rect x="15" y="6" width="1" height="1" fill="#232323"/><rect x="0" y="7" width="1" height="1" fill="#5c5c5c"/><rect x="1" y="7" width="1" height="1" fill="#8a8a8a"/><rect x="2" y="7" width="1" height="1" fill="#dcdcdc"/><rect x="3" y="7" width="6" height="1" fill="#5592e0"/><rect x="9" y="7" width="1" height="1" fill="#dcdcdc"/><rect x="10" y="7" width="1" height="1" fill="#474747"/><rect x="11" y="7" width="2" height="1" fill="#b4b4b4"/><rect x="13" y="7" width="1" height="1" fill="#474747"/><rect x="14" y="7" width="1" height="1" fill="#8a8a8a"/><rect x="15" y="7" width="1" height="1" fill="#232323"/><rect x="0" y="8" width="1" height="1" fill="#5c5c5c"/><rect x="1" y="8" width="1" height="1" fill="#8a8a8a"/><rect x="2" y="8" width="1" height="1" fill="#dcdcdc"/><rect x="3" y="8" width="6" height="1" fill="#5592e0"/><rect x="9" y="8" width="1" height="1" fill="#dcdcdc"/><rect x="10" y="8" width="1" height="1" fill="#474747"/><rect x="11" y="8" width="2" height="1" fill="#b4b4b4"/><rect x="13" y="8" width="1" height="1" fill="#474747"/><rect x="14" y="8" width="1" height="1" fill="#8a8a8a"/><rect x="15" y="8" width="1" height="1" fill="#232323"/><rect x="0" y="9" width="1" height="1" fill="#5c5c5c"/><rect x="1" y="9" width="1" height="1" fill="#8a8a8a"/><rect x="2" y="9" width="1" height="1" fill="#dcdcdc"/><rect x="3" y="9" width="6" height="1" fill="#5592e0"/><rect x="9" y="9" width="1" height="1" fill="#dcdcdc"/><rect x="10" y="9" width="1" height="1" fill="#474747"/><rect x="11" y="9" width="2" height="1" fill="#b4b4b4"/><rect x="13" y="9" width="1" height="1" fill="#474747"/><rect x="14" y="9" width="1" height="1" fill="#8a8a8a"/><rect x="15" y="9" width="1" height="1" fill="#232323"/><rect x="0" y="10" width="1" height="1" fill="#5c5c5c"/><rect x="1" y="10" width="3" height="1" fill="#8a8a8a"/><rect x="4" y="10" width="5" height="1" fill="#b4b4b4"/><rect x="9" y="10" width="1" height="1" fill="#8a8a8a"/><rect x="10" y="10" width="1" height="1" fill="#474747"/><rect x="11" y="10" width="2" height="1" fill="#b4b4b4"/><rect x="13" y="10" width="1" height="1" fill="#474747"/><rect x="14" y="10" width="1" height="1" fill="#8a8a8a"/><rect x="15" y="10" width="1" height="1" fill="#232323"/><rect x="1" y="11" width="14" height="1" fill="#232323"/></svg>
<svg class="r" style="left:2036px;top:68px" width="26" height="24" viewBox="0 0 13 12" shape-rendering="crispEdges"><rect x="3" y="0" width="1" height="1" fill="#aab9ca"/><rect x="4" y="0" width="1" height="1" fill="#d4dde8"/><rect x="5" y="0" width="1" height="1" fill="#aab9ca"/><rect x="7" y="0" width="1" height="1" fill="#8a99aa"/><rect x="8" y="0" width="1" height="1" fill="#5a6472"/><rect x="3" y="1" width="1" height="1" fill="#8a99aa"/><rect x="4" y="1" width="1" height="1" fill="#d4dde8"/><rect x="5" y="1" width="1" height="1" fill="#262c34"/><rect x="7" y="1" width="1" height="1" fill="#262c34"/><rect x="8" y="1" width="1" height="1" fill="#8a99aa"/><rect x="9" y="1" width="1" height="1" fill="#aab9ca"/><rect x="1" y="2" width="1" height="1" fill="#6c7886"/><rect x="2" y="2" width="3" height="1" fill="#8a99aa"/><rect x="5" y="2" width="1" height="1" fill="#262c34"/><rect x="7" y="2" width="1" height="1" fill="#262c34"/><rect x="8" y="2" width="2" height="1" fill="#8a99aa"/><rect x="10" y="2" width="1" height="1" fill="#262c34"/><rect x="11" y="2" width="1" height="1" fill="#6c7886"/><rect x="1" y="3" width="2" height="1" fill="#8a99aa"/><rect x="3" y="3" width="3" height="1" fill="#262c34"/><rect x="6" y="3" width="1" height="1" fill="#5a6472"/><rect x="7" y="3" width="1" height="1" fill="#262c34"/><rect x="8" y="3" width="3" height="1" fill="#7f9bd0"/><rect x="11" y="3" width="1" height="1" fill="#262c34"/><rect x="12" y="3" width="1" height="1" fill="#0c0f12"/><rect x="0" y="4" width="2" height="1" fill="#aab9ca"/><rect x="2" y="4" width="1" height="1" fill="#8a99aa"/><rect x="3" y="4" width="7" height="1" fill="#7f9bd0"/><rect x="10" y="4" width="2" height="1" fill="#aab9ca"/><rect x="12" y="4" width="1" height="1" fill="#0c0f12"/><rect x="0" y="5" width="2" height="1" fill="#aab9ca"/><rect x="2" y="5" width="3" height="1" fill="#6c7886"/><rect x="5" y="5" width="1" height="1" fill="#5a6472"/><rect x="6" y="5" width="1" height="1" fill="#0c0f12"/><rect x="7" y="5" width="5" height="1" fill="#8a99aa"/><rect x="12" y="5" width="1" height="1" fill="#0c0f12"/><rect x="0" y="6" width="6" height="1" fill="#262c34"/><rect x="7" y="6" width="6" height="1" fill="#0c0f12"/><rect x="0" y="7" width="1" height="1" fill="#262c34"/><rect x="1" y="7" width="1" height="1" fill="#8a99aa"/><rect x="2" y="7" width="3" height="1" fill="#d4dde8"/><rect x="5" y="7" width="1" height="1" fill="#262c34"/><rect x="7" y="7" width="1" height="1" fill="#0c0f12"/><rect x="8" y="7" width="1" height="1" fill="#8a99aa"/><rect x="9" y="7" width="3" height="1" fill="#d4dde8"/><rect x="12" y="7" width="1" height="1" fill="#0c0f12"/><rect x="0" y="8" width="1" height="1" fill="#262c34"/><rect x="1" y="8" width="1" height="1" fill="#8a99aa"/><rect x="2" y="8" width="1" height="1" fill="#d4dde8"/><rect x="3" y="8" width="2" height="1" fill="#6c7886"/><rect x="5" y="8" width="1" height="1" fill="#262c34"/><rect x="7" y="8" width="1" height="1" fill="#0c0f12"/><rect x="8" y="8" width="1" height="1" fill="#8a99aa"/><rect x="9" y="8" width="1" height="1" fill="#d4dde8"/><rect x="10" y="8" width="2" height="1" fill="#6c7886"/><rect x="12" y="8" width="1" height="1" fill="#0c0f12"/><rect x="0" y="9" width="1" height="1" fill="#262c34"/><rect x="1" y="9" width="1" height="1" fill="#8a99aa"/><rect x="2" y="9" width="1" height="1" fill="#d4dde8"/><rect x="3" y="9" width="2" height="1" fill="#6c7886"/><rect x="5" y="9" width="1" height="1" fill="#262c34"/><rect x="7" y="9" width="1" height="1" fill="#0c0f12"/><rect x="8" y="9" width="1" height="1" fill="#8a99aa"/><rect x="9" y="9" width="1" height="1" fill="#d4dde8"/><rect x="10" y="9" width="2" height="1" fill="#6c7886"/><rect x="12" y="9" width="1" height="1" fill="#0c0f12"/><rect x="0" y="10" width="1" height="1" fill="#262c34"/><rect x="1" y="10" width="1" height="1" fill="#8a99aa"/><rect x="2" y="10" width="1" height="1" fill="#d4dde8"/><rect x="3" y="10" width="2" height="1" fill="#6c7886"/><rect x="5" y="10" width="1" height="1" fill="#262c34"/><rect x="7" y="10" width="1" height="1" fill="#0c0f12"/><rect x="8" y="10" width="1" height="1" fill="#8a99aa"/><rect x="9" y="10" width="1" height="1" fill="#d4dde8"/><rect x="10" y="10" width="2" height="1" fill="#6c7886"/><rect x="12" y="10" width="1" height="1" fill="#0c0f12"/><rect x="0" y="11" width="6" height="1" fill="#262c34"/><rect x="7" y="11" width="6" height="1" fill="#0c0f12"/></svg>
<svg class="r" style="left:2094px;top:64px" width="32" height="32" viewBox="0 0 16 16" shape-rendering="crispEdges"><rect x="5" y="0" width="6" height="1" fill="#52b54c"/><rect x="3" y="1" width="2" height="1" fill="#52b54c"/><rect x="5" y="1" width="2" height="1" fill="#c4e8a6"/><rect x="7" y="1" width="2" height="1" fill="#bfe3e6"/><rect x="9" y="1" width="2" height="1" fill="#c4e8a6"/><rect x="11" y="1" width="2" height="1" fill="#52b54c"/><rect x="2" y="2" width="1" height="1" fill="#52b54c"/><rect x="3" y="2" width="1" height="1" fill="#c4e8a6"/><rect x="4" y="2" width="2" height="1" fill="#e2f3b8"/><rect x="6" y="2" width="2" height="1" fill="#bfe3e6"/><rect x="8" y="2" width="3" height="1" fill="#9bcfe4"/><rect x="11" y="2" width="1" height="1" fill="#bfe3e6"/><rect x="12" y="2" width="1" height="1" fill="#c4e8a6"/><rect x="13" y="2" width="1" height="1" fill="#52b54c"/><rect x="1" y="3" width="1" height="1" fill="#52b54c"/><rect x="2" y="3" width="1" height="1" fill="#e2f3b8"/><rect x="3" y="3" width="2" height="1" fill="#c4e8a6"/><rect x="5" y="3" width="2" height="1" fill="#bfe3e6"/><rect x="7" y="3" width="2" height="1" fill="#9bcfe4"/><rect x="9" y="3" width="2" height="1" fill="#5aa5dc"/><rect x="11" y="3" width="1" height="1" fill="#9bcfe4"/><rect x="12" y="3" width="1" height="1" fill="#c4e8a6"/><rect x="13" y="3" width="1" height="1" fill="#e2f3b8"/><rect x="14" y="3" width="1" height="1" fill="#52b54c"/><rect x="1" y="4" width="1" height="1" fill="#52b54c"/><rect x="2" y="4" width="1" height="1" fill="#e2f3b8"/><rect x="3" y="4" width="1" height="1" fill="#c4e8a6"/><rect x="4" y="4" width="1" height="1" fill="#8cd488"/><rect x="5" y="4" width="1" height="1" fill="#bfe3e6"/><rect x="6" y="4" width="1" height="1" fill="#9bcfe4"/><rect x="7" y="4" width="2" height="1" fill="#5aa5dc"/><rect x="9" y="4" width="3" height="1" fill="#48cc5a"/><rect x="12" y="4" width="1" height="1" fill="#8cd488"/><rect x="13" y="4" width="1" height="1" fill="#e2f3b8"/><rect x="14" y="4" width="1" height="1" fill="#52b54c"/><rect x="0" y="5" width="1" height="1" fill="#52b54c"/><rect x="1" y="5" width="1" height="1" fill="#e2f3b8"/><rect x="2" y="5" width="1" height="1" fill="#c4e8a6"/><rect x="3" y="5" width="1" height="1" fill="#8cd488"/><rect x="4" y="5" width="2" height="1" fill="#bfe3e6"/><rect x="6" y="5" width="2" height="1" fill="#5aa5dc"/><rect x="8" y="5" width="5" height="1" fill="#48cc5a"/><rect x="13" y="5" width="1" height="1" fill="#8cd488"/><rect x="14" y="5" width="1" height="1" fill="#e2f3b8"/><rect x="15" y="5" width="1" height="1" fill="#52b54c"/><rect x="0" y="6" width="1" height="1" fill="#52b54c"/><rect x="1" y="6" width="1" height="1" fill="#e2f3b8"/><rect x="2" y="6" width="2" height="1" fill="#8cd488"/><rect x="4" y="6" width="1" height="1" fill="#bfe3e6"/><rect x="5" y="6" width="4" height="1" fill="#5aa5dc"/><rect x="9" y="6" width="3" height="1" fill="#48cc5a"/><rect x="12" y="6" width="2" height="1" fill="#8cd488"/><rect x="14" y="6" width="1" height="1" fill="#e2f3b8"/><rect x="15" y="6" width="1" height="1" fill="#52b54c"/><rect x="0" y="7" width="1" height="1" fill="#52b54c"/><rect x="1" y="7" width="1" height="1" fill="#e2f3b8"/><rect x="2" y="7" width="1" height="1" fill="#8cd488"/><rect x="3" y="7" width="2" height="1" fill="#bfe3e6"/><rect x="5" y="7" width="3" height="1" fill="#5aa5dc"/><rect x="8" y="7" width="1" height="1" fill="#8cd488"/><rect x="9" y="7" width="1" height="1" fill="#bfe3e6"/><rect x="10" y="7" width="1" height="1" fill="#48cc5a"/><rect x="11" y="7" width="2" height="1" fill="#5aa5dc"/><rect x="13" y="7" width="1" height="1" fill="#8cd488"/><rect x="14" y="7" width="1" height="1" fill="#e2f3b8"/><rect x="15" y="7" width="1" height="1" fill="#3a9a36"/><rect x="0" y="8" width="1" height="1" fill="#52b54c"/><rect x="1" y="8" width="1" height="1" fill="#e2f3b8"/><rect x="2" y="8" width="1" height="1" fill="#8cd488"/><rect x="3" y="8" width="1" height="1" fill="#bfe3e6"/><rect x="4" y="8" width="6" height="1" fill="#5aa5dc"/><rect x="10" y="8" width="2" height="1" fill="#4a8ccf"/><rect x="12" y="8" width="1" height="1" fill="#5aa5dc"/><rect x="13" y="8" width="1" height="1" fill="#8cd488"/><rect x="14" y="8" width="1" height="1" fill="#e2f3b8"/><rect x="15" y="8" width="1" height="1" fill="#3a9a36"/><rect x="0" y="9" width="1" height="1" fill="#52b54c"/><rect x="1" y="9" width="1" height="1" fill="#e2f3b8"/><rect x="2" y="9" width="1" height="1" fill="#8cd488"/><rect x="3" y="9" width="1" height="1" fill="#bfe3e6"/><rect x="4" y="9" width="6" height="1" fill="#5aa5dc"/><rect x="10" y="9" width="2" height="1" fill="#4a8ccf"/><rect x="12" y="9" width="1" height="1" fill="#5aa5dc"/><rect x="13" y="9" width="1" height="1" fill="#8cd488"/><rect x="14" y="9" width="1" height="1" fill="#e2f3b8"/><rect x="15" y="9" width="1" height="1" fill="#3a9a36"/><rect x="1" y="10" width="1" height="1" fill="#52b54c"/><rect x="2" y="10" width="1" height="1" fill="#e2f3b8"/><rect x="3" y="10" width="1" height="1" fill="#8cd488"/><rect x="4" y="10" width="8" height="1" fill="#5aa5dc"/><rect x="12" y="10" width="2" height="1" fill="#8cd488"/><rect x="14" y="10" width="1" height="1" fill="#e2f3b8"/><rect x="15" y="10" width="1" height="1" fill="#3a9a36"/><rect x="1" y="11" width="1" height="1" fill="#52b54c"/><rect x="2" y="11" width="1" height="1" fill="#e2f3b8"/><rect x="3" y="11" width="1" height="1" fill="#c4e8a6"/><rect x="4" y="11" width="1" height="1" fill="#8cd488"/><rect x="5" y="11" width="6" height="1" fill="#5aa5dc"/><rect x="11" y="11" width="3" height="1" fill="#8cd488"/><rect x="14" y="11" width="1" height="1" fill="#3a9a36"/><rect x="2" y="12" width="1" height="1" fill="#52b54c"/><rect x="3" y="12" width="1" height="1" fill="#e2f3b8"/><rect x="4" y="12" width="1" height="1" fill="#c4e8a6"/><rect x="5" y="12" width="1" height="1" fill="#bfe3e6"/><rect x="6" y="12" width="5" height="1" fill="#5aa5dc"/><rect x="11" y="12" width="1" height="1" fill="#8cd488"/><rect x="12" y="12" width="1" height="1" fill="#e2f3b8"/><rect x="13" y="12" width="1" height="1" fill="#3a9a36"/><rect x="3" y="13" width="1" height="1" fill="#52b54c"/><rect x="4" y="13" width="1" height="1" fill="#e2f3b8"/><rect x="5" y="13" width="1" height="1" fill="#c4e8a6"/><rect x="6" y="13" width="4" height="1" fill="#bfe3e6"/><rect x="10" y="13" width="1" height="1" fill="#c4e8a6"/><rect x="11" y="13" width="1" height="1" fill="#e2f3b8"/><rect x="12" y="13" width="1" height="1" fill="#3a9a36"/><rect x="4" y="14" width="2" height="1" fill="#3a9a36"/><rect x="6" y="14" width="4" height="1" fill="#e2f3b8"/><rect x="10" y="14" width="2" height="1" fill="#3a9a36"/><rect x="5" y="15" width="6" height="1" fill="#3a9a36"/></svg>
<svg class="r" style="left:2193px;top:64px" width="32" height="32" viewBox="0 0 16 16" shape-rendering="crispEdges"><rect x="5" y="0" width="6" height="1" fill="#52b54c"/><rect x="3" y="1" width="2" height="1" fill="#52b54c"/><rect x="5" y="1" width="2" height="1" fill="#c4e8a6"/><rect x="7" y="1" width="2" height="1" fill="#bfe3e6"/><rect x="9" y="1" width="2" height="1" fill="#c4e8a6"/><rect x="11" y="1" width="2" height="1" fill="#52b54c"/><rect x="2" y="2" width="1" height="1" fill="#52b54c"/><rect x="3" y="2" width="1" height="1" fill="#c4e8a6"/><rect x="4" y="2" width="2" height="1" fill="#e2f3b8"/><rect x="6" y="2" width="2" height="1" fill="#bfe3e6"/><rect x="8" y="2" width="3" height="1" fill="#9bcfe4"/><rect x="11" y="2" width="1" height="1" fill="#bfe3e6"/><rect x="12" y="2" width="1" height="1" fill="#c4e8a6"/><rect x="13" y="2" width="1" height="1" fill="#52b54c"/><rect x="1" y="3" width="1" height="1" fill="#52b54c"/><rect x="2" y="3" width="1" height="1" fill="#e2f3b8"/><rect x="3" y="3" width="2" height="1" fill="#c4e8a6"/><rect x="5" y="3" width="2" height="1" fill="#bfe3e6"/><rect x="7" y="3" width="2" height="1" fill="#9bcfe4"/><rect x="9" y="3" width="2" height="1" fill="#5aa5dc"/><rect x="11" y="3" width="1" height="1" fill="#9bcfe4"/><rect x="12" y="3" width="1" height="1" fill="#c4e8a6"/><rect x="13" y="3" width="1" height="1" fill="#e2f3b8"/><rect x="14" y="3" width="1" height="1" fill="#52b54c"/><rect x="1" y="4" width="1" height="1" fill="#52b54c"/><rect x="2" y="4" width="1" height="1" fill="#e2f3b8"/><rect x="3" y="4" width="1" height="1" fill="#c4e8a6"/><rect x="4" y="4" width="1" height="1" fill="#8cd488"/><rect x="5" y="4" width="1" height="1" fill="#bfe3e6"/><rect x="6" y="4" width="1" height="1" fill="#9bcfe4"/><rect x="7" y="4" width="2" height="1" fill="#5aa5dc"/><rect x="9" y="4" width="3" height="1" fill="#48cc5a"/><rect x="12" y="4" width="1" height="1" fill="#8cd488"/><rect x="13" y="4" width="1" height="1" fill="#e2f3b8"/><rect x="14" y="4" width="1" height="1" fill="#52b54c"/><rect x="0" y="5" width="1" height="1" fill="#52b54c"/><rect x="1" y="5" width="1" height="1" fill="#e2f3b8"/><rect x="2" y="5" width="1" height="1" fill="#c4e8a6"/><rect x="3" y="5" width="1" height="1" fill="#8cd488"/><rect x="4" y="5" width="2" height="1" fill="#bfe3e6"/><rect x="6" y="5" width="2" height="1" fill="#5aa5dc"/><rect x="8" y="5" width="5" height="1" fill="#48cc5a"/><rect x="13" y="5" width="1" height="1" fill="#8cd488"/><rect x="14" y="5" width="1" height="1" fill="#e2f3b8"/><rect x="15" y="5" width="1" height="1" fill="#52b54c"/><rect x="0" y="6" width="1" height="1" fill="#52b54c"/><rect x="1" y="6" width="1" height="1" fill="#e2f3b8"/><rect x="2" y="6" width="2" height="1" fill="#8cd488"/><rect x="4" y="6" width="1" height="1" fill="#bfe3e6"/><rect x="5" y="6" width="4" height="1" fill="#5aa5dc"/><rect x="9" y="6" width="3" height="1" fill="#48cc5a"/><rect x="12" y="6" width="2" height="1" fill="#8cd488"/><rect x="14" y="6" width="1" height="1" fill="#e2f3b8"/><rect x="15" y="6" width="1" height="1" fill="#52b54c"/><rect x="0" y="7" width="1" height="1" fill="#52b54c"/><rect x="1" y="7" width="1" height="1" fill="#e2f3b8"/><rect x="2" y="7" width="1" height="1" fill="#8cd488"/><rect x="3" y="7" width="2" height="1" fill="#bfe3e6"/><rect x="5" y="7" width="3" height="1" fill="#5aa5dc"/><rect x="8" y="7" width="1" height="1" fill="#8cd488"/><rect x="9" y="7" width="1" height="1" fill="#bfe3e6"/><rect x="10" y="7" width="1" height="1" fill="#48cc5a"/><rect x="11" y="7" width="2" height="1" fill="#5aa5dc"/><rect x="13" y="7" width="1" height="1" fill="#8cd488"/><rect x="14" y="7" width="1" height="1" fill="#e2f3b8"/><rect x="15" y="7" width="1" height="1" fill="#3a9a36"/><rect x="0" y="8" width="1" height="1" fill="#52b54c"/><rect x="1" y="8" width="1" height="1" fill="#e2f3b8"/><rect x="2" y="8" width="1" height="1" fill="#8cd488"/><rect x="3" y="8" width="1" height="1" fill="#bfe3e6"/><rect x="4" y="8" width="6" height="1" fill="#5aa5dc"/><rect x="10" y="8" width="2" height="1" fill="#4a8ccf"/><rect x="12" y="8" width="1" height="1" fill="#5aa5dc"/><rect x="13" y="8" width="1" height="1" fill="#8cd488"/><rect x="14" y="8" width="1" height="1" fill="#e2f3b8"/><rect x="15" y="8" width="1" height="1" fill="#3a9a36"/><rect x="0" y="9" width="1" height="1" fill="#52b54c"/><rect x="1" y="9" width="1" height="1" fill="#e2f3b8"/><rect x="2" y="9" width="1" height="1" fill="#8cd488"/><rect x="3" y="9" width="1" height="1" fill="#bfe3e6"/><rect x="4" y="9" width="6" height="1" fill="#5aa5dc"/><rect x="10" y="9" width="2" height="1" fill="#4a8ccf"/><rect x="12" y="9" width="1" height="1" fill="#5aa5dc"/><rect x="13" y="9" width="1" height="1" fill="#8cd488"/><rect x="14" y="9" width="1" height="1" fill="#e2f3b8"/><rect x="15" y="9" width="1" height="1" fill="#3a9a36"/><rect x="1" y="10" width="1" height="1" fill="#52b54c"/><rect x="2" y="10" width="1" height="1" fill="#e2f3b8"/><rect x="3" y="10" width="1" height="1" fill="#8cd488"/><rect x="4" y="10" width="8" height="1" fill="#5aa5dc"/><rect x="12" y="10" width="2" height="1" fill="#8cd488"/><rect x="14" y="10" width="1" height="1" fill="#e2f3b8"/><rect x="15" y="10" width="1" height="1" fill="#3a9a36"/><rect x="1" y="11" width="1" height="1" fill="#52b54c"/><rect x="2" y="11" width="1" height="1" fill="#e2f3b8"/><rect x="3" y="11" width="1" height="1" fill="#c4e8a6"/><rect x="4" y="11" width="1" height="1" fill="#8cd488"/><rect x="5" y="11" width="6" height="1" fill="#5aa5dc"/><rect x="11" y="11" width="3" height="1" fill="#8cd488"/><rect x="14" y="11" width="1" height="1" fill="#3a9a36"/><rect x="2" y="12" width="1" height="1" fill="#52b54c"/><rect x="3" y="12" width="1" height="1" fill="#e2f3b8"/><rect x="4" y="12" width="1" height="1" fill="#c4e8a6"/><rect x="5" y="12" width="1" height="1" fill="#bfe3e6"/><rect x="6" y="12" width="5" height="1" fill="#5aa5dc"/><rect x="11" y="12" width="1" height="1" fill="#8cd488"/><rect x="12" y="12" width="1" height="1" fill="#e2f3b8"/><rect x="13" y="12" width="1" height="1" fill="#3a9a36"/><rect x="3" y="13" width="1" height="1" fill="#52b54c"/><rect x="4" y="13" width="1" height="1" fill="#e2f3b8"/><rect x="5" y="13" width="1" height="1" fill="#c4e8a6"/><rect x="6" y="13" width="4" height="1" fill="#bfe3e6"/><rect x="10" y="13" width="1" height="1" fill="#c4e8a6"/><rect x="11" y="13" width="1" height="1" fill="#e2f3b8"/><rect x="12" y="13" width="1" height="1" fill="#3a9a36"/><rect x="4" y="14" width="2" height="1" fill="#3a9a36"/><rect x="6" y="14" width="4" height="1" fill="#e2f3b8"/><rect x="10" y="14" width="2" height="1" fill="#3a9a36"/><rect x="5" y="15" width="6" height="1" fill="#3a9a36"/></svg>
<svg class="r" style="left:2298px;top:64px;overflow:visible" width="26" height="32" viewBox="0 0 26 32"><rect x="0.5" y="2" width="23" height="29.5" fill="#3e64a4"/><rect x="2" y="0.5" width="24" height="29.5" fill="#2f5595"/><rect x="3.5" y="5" width="19.5" height="23" fill="url(#gBook)"/><rect x="4" y="4" width="20" height="2" fill="#ffffff"/><rect x="3" y="6" width="1.5" height="22" fill="#d8e8f8"/><rect x="8" y="12" width="10" height="2" fill="#f0f6ff"/></svg>
<svg class="r" style="left:2396px;top:64px;overflow:visible" width="26" height="32" viewBox="0 0 26 32"><rect x="0.5" y="2" width="23" height="29.5" fill="#3e64a4"/><rect x="2" y="0.5" width="24" height="29.5" fill="#2f5595"/><rect x="3.5" y="5" width="19.5" height="23" fill="url(#gBook)"/><rect x="4" y="4" width="20" height="2" fill="#ffffff"/><rect x="3" y="6" width="1.5" height="22" fill="#d8e8f8"/><rect x="8" y="12" width="10" height="2" fill="#f0f6ff"/></svg>
<svg class="r" style="left:2492px;top:68px" width="32" height="26" viewBox="0 0 16 13" shape-rendering="crispEdges"><rect x="4" y="0" width="8" height="1" fill="#e6e6e6"/><rect x="2" y="1" width="2" height="1" fill="#e6e6e6"/><rect x="4" y="1" width="8" height="1" fill="#f4f4f4"/><rect x="12" y="1" width="2" height="1" fill="#e6e6e6"/><rect x="1" y="2" width="1" height="1" fill="#e6e6e6"/><rect x="2" y="2" width="2" height="1" fill="#f4f4f4"/><rect x="4" y="2" width="8" height="1" fill="#c4866a"/><rect x="12" y="2" width="2" height="1" fill="#f4f4f4"/><rect x="14" y="2" width="1" height="1" fill="#e6e6e6"/><rect x="1" y="3" width="1" height="1" fill="#e6e6e6"/><rect x="2" y="3" width="1" height="1" fill="#f4f4f4"/><rect x="3" y="3" width="10" height="1" fill="#974826"/><rect x="13" y="3" width="1" height="1" fill="#f4f4f4"/><rect x="14" y="3" width="1" height="1" fill="#e6e6e6"/><rect x="1" y="4" width="1" height="1" fill="#e6e6e6"/><rect x="2" y="4" width="2" height="1" fill="#f4f4f4"/><rect x="4" y="4" width="8" height="1" fill="#c4866a"/><rect x="12" y="4" width="2" height="1" fill="#f4f4f4"/><rect x="14" y="4" width="1" height="1" fill="#e6e6e6"/><rect x="1" y="5" width="1" height="1" fill="#e6e6e6"/><rect x="2" y="5" width="1" height="1" fill="#f4f4f4"/><rect x="3" y="5" width="4" height="1" fill="#ffffff"/><rect x="7" y="5" width="7" height="1" fill="#f4f4f4"/><rect x="14" y="5" width="1" height="1" fill="#e6e6e6"/><rect x="1" y="6" width="1" height="1" fill="#e6e6e6"/><rect x="2" y="6" width="2" height="1" fill="#ffffff"/><rect x="4" y="6" width="9" height="1" fill="#e1e1e1"/><rect x="13" y="6" width="1" height="1" fill="#f4f4f4"/><rect x="14" y="6" width="1" height="1" fill="#e6e6e6"/><rect x="1" y="7" width="1" height="1" fill="#777777"/><rect x="2" y="7" width="1" height="1" fill="#ffffff"/><rect x="3" y="7" width="9" height="1" fill="#e1e1e1"/><rect x="12" y="7" width="1" height="1" fill="#cdcdcd"/><rect x="13" y="7" width="1" height="1" fill="#f4f4f4"/><rect x="14" y="7" width="1" height="1" fill="#e6e6e6"/><rect x="2" y="8" width="1" height="1" fill="#e6e6e6"/><rect x="3" y="8" width="1" height="1" fill="#ffffff"/><rect x="4" y="8" width="8" height="1" fill="#e1e1e1"/><rect x="12" y="8" width="1" height="1" fill="#cdcdcd"/><rect x="13" y="8" width="1" height="1" fill="#e6e6e6"/><rect x="2" y="9" width="1" height="1" fill="#777777"/><rect x="3" y="9" width="1" height="1" fill="#e6e6e6"/><rect x="4" y="9" width="8" height="1" fill="#e1e1e1"/><rect x="12" y="9" width="2" height="1" fill="#e6e6e6"/><rect x="3" y="10" width="1" height="1" fill="#777777"/><rect x="4" y="10" width="1" height="1" fill="#e6e6e6"/><rect x="5" y="10" width="1" height="1" fill="#f4f4f4"/><rect x="6" y="10" width="4" height="1" fill="#e1e1e1"/><rect x="10" y="10" width="2" height="1" fill="#f4f4f4"/><rect x="12" y="10" width="1" height="1" fill="#e6e6e6"/><rect x="4" y="11" width="2" height="1" fill="#e6e6e6"/><rect x="6" y="11" width="1" height="1" fill="#f4f4f4"/><rect x="7" y="11" width="3" height="1" fill="#ffffff"/><rect x="10" y="11" width="1" height="1" fill="#f4f4f4"/><rect x="11" y="11" width="2" height="1" fill="#e6e6e6"/><rect x="6" y="12" width="6" height="1" fill="#e6e6e6"/></svg>
<svg class="r" style="left:2590px;top:68px" width="32" height="26" viewBox="0 0 16 13" shape-rendering="crispEdges"><rect x="4" y="0" width="8" height="1" fill="#e6e6e6"/><rect x="2" y="1" width="2" height="1" fill="#e6e6e6"/><rect x="4" y="1" width="8" height="1" fill="#f4f4f4"/><rect x="12" y="1" width="2" height="1" fill="#e6e6e6"/><rect x="1" y="2" width="1" height="1" fill="#e6e6e6"/><rect x="2" y="2" width="2" height="1" fill="#f4f4f4"/><rect x="4" y="2" width="8" height="1" fill="#c4866a"/><rect x="12" y="2" width="2" height="1" fill="#f4f4f4"/><rect x="14" y="2" width="1" height="1" fill="#e6e6e6"/><rect x="1" y="3" width="1" height="1" fill="#e6e6e6"/><rect x="2" y="3" width="1" height="1" fill="#f4f4f4"/><rect x="3" y="3" width="10" height="1" fill="#974826"/><rect x="13" y="3" width="1" height="1" fill="#f4f4f4"/><rect x="14" y="3" width="1" height="1" fill="#e6e6e6"/><rect x="1" y="4" width="1" height="1" fill="#e6e6e6"/><rect x="2" y="4" width="2" height="1" fill="#f4f4f4"/><rect x="4" y="4" width="8" height="1" fill="#c4866a"/><rect x="12" y="4" width="2" height="1" fill="#f4f4f4"/><rect x="14" y="4" width="1" height="1" fill="#e6e6e6"/><rect x="1" y="5" width="1" height="1" fill="#e6e6e6"/><rect x="2" y="5" width="1" height="1" fill="#f4f4f4"/><rect x="3" y="5" width="4" height="1" fill="#ffffff"/><rect x="7" y="5" width="7" height="1" fill="#f4f4f4"/><rect x="14" y="5" width="1" height="1" fill="#e6e6e6"/><rect x="1" y="6" width="1" height="1" fill="#e6e6e6"/><rect x="2" y="6" width="2" height="1" fill="#ffffff"/><rect x="4" y="6" width="9" height="1" fill="#e1e1e1"/><rect x="13" y="6" width="1" height="1" fill="#f4f4f4"/><rect x="14" y="6" width="1" height="1" fill="#e6e6e6"/><rect x="1" y="7" width="1" height="1" fill="#777777"/><rect x="2" y="7" width="1" height="1" fill="#ffffff"/><rect x="3" y="7" width="9" height="1" fill="#e1e1e1"/><rect x="12" y="7" width="1" height="1" fill="#cdcdcd"/><rect x="13" y="7" width="1" height="1" fill="#f4f4f4"/><rect x="14" y="7" width="1" height="1" fill="#e6e6e6"/><rect x="2" y="8" width="1" height="1" fill="#e6e6e6"/><rect x="3" y="8" width="1" height="1" fill="#ffffff"/><rect x="4" y="8" width="8" height="1" fill="#e1e1e1"/><rect x="12" y="8" width="1" height="1" fill="#cdcdcd"/><rect x="13" y="8" width="1" height="1" fill="#e6e6e6"/><rect x="2" y="9" width="1" height="1" fill="#777777"/><rect x="3" y="9" width="1" height="1" fill="#e6e6e6"/><rect x="4" y="9" width="8" height="1" fill="#e1e1e1"/><rect x="12" y="9" width="2" height="1" fill="#e6e6e6"/><rect x="3" y="10" width="1" height="1" fill="#777777"/><rect x="4" y="10" width="1" height="1" fill="#e6e6e6"/><rect x="5" y="10" width="1" height="1" fill="#f4f4f4"/><rect x="6" y="10" width="4" height="1" fill="#e1e1e1"/><rect x="10" y="10" width="2" height="1" fill="#f4f4f4"/><rect x="12" y="10" width="1" height="1" fill="#e6e6e6"/><rect x="4" y="11" width="2" height="1" fill="#e6e6e6"/><rect x="6" y="11" width="1" height="1" fill="#f4f4f4"/><rect x="7" y="11" width="3" height="1" fill="#ffffff"/><rect x="10" y="11" width="1" height="1" fill="#f4f4f4"/><rect x="11" y="11" width="2" height="1" fill="#e6e6e6"/><rect x="6" y="12" width="6" height="1" fill="#e6e6e6"/></svg>
<svg class="r" style="left:2698px;top:70px;overflow:visible" width="24" height="22" viewBox="0 0 24 22"><rect x="0" y="0" width="10" height="2" fill="#7a7a7a"/><rect x="14" y="0" width="10" height="2" fill="#4a4a4a"/><rect x="0" y="4" width="10" height="2" fill="#747474"/><rect x="14" y="4" width="10" height="2" fill="#404040"/><rect x="0" y="8" width="10" height="2" fill="#6a6a6a"/><rect x="14" y="8" width="10" height="2" fill="#343434"/><rect x="0" y="12" width="10" height="2" fill="#5a5a5a"/><rect x="14" y="12" width="10" height="2" fill="#262626"/><rect x="0" y="16" width="10" height="2" fill="#4a4a4a"/><rect x="14" y="16" width="10" height="2" fill="#181818"/><rect x="0" y="20" width="10" height="2" fill="#3a3a3a"/><rect x="14" y="20" width="10" height="2" fill="#000000"/></svg>
<svg class="r" style="left:2796px;top:66px;overflow:visible" width="28" height="28" viewBox="0 0 28 28"><rect x="1" y="1" width="26" height="26" fill="#ffffff" stroke="#6f9fe0" stroke-width="2"/><rect x="4" y="4" width="20" height="2" fill="#6cc06a"/><rect x="4" y="8" width="20" height="17" fill="#a9c6ec"/><rect x="6" y="10" width="2" height="2" fill="#fff"/><rect x="10" y="10" width="6" height="2" fill="#fff"/><rect x="18" y="10" width="6" height="2" fill="#fff"/><rect x="6" y="14" width="2" height="2" fill="#fff"/><rect x="10" y="14" width="6" height="2" fill="#fff"/><rect x="18" y="14" width="6" height="2" fill="#fff"/><rect x="6" y="18" width="2" height="2" fill="#fff"/><rect x="10" y="18" width="6" height="2" fill="#fff"/><rect x="18" y="18" width="6" height="2" fill="#fff"/><rect x="6" y="22" width="2" height="2" fill="#fff"/><rect x="10" y="22" width="6" height="2" fill="#fff"/><rect x="18" y="22" width="6" height="2" fill="#fff"/></svg>
<svg class="r" style="left:2894px;top:66px;overflow:visible" width="28" height="28" viewBox="0 0 28 28"><rect x="1" y="1" width="26" height="26" fill="#ffffff" stroke="#6f9fe0" stroke-width="2"/><rect x="4" y="4" width="20" height="2" fill="#6cc06a"/><rect x="4" y="8" width="20" height="17" fill="#a9c6ec"/><rect x="6" y="10" width="2" height="2" fill="#fff"/><rect x="10" y="10" width="6" height="2" fill="#fff"/><rect x="18" y="10" width="6" height="2" fill="#fff"/><rect x="6" y="14" width="2" height="2" fill="#fff"/><rect x="10" y="14" width="6" height="2" fill="#fff"/><rect x="18" y="14" width="6" height="2" fill="#fff"/><rect x="6" y="18" width="2" height="2" fill="#fff"/><rect x="10" y="18" width="6" height="2" fill="#fff"/><rect x="18" y="18" width="6" height="2" fill="#fff"/><rect x="6" y="22" width="2" height="2" fill="#fff"/><rect x="10" y="22" width="6" height="2" fill="#fff"/><rect x="18" y="22" width="6" height="2" fill="#fff"/></svg>
<svg class="r" style="left:2986px;top:64px;overflow:visible" width="32" height="32" viewBox="0 0 32 32"><rect x="0.5" y="10" width="28" height="21.5" fill="#e8982a"/><rect x="2.5" y="12" width="12" height="9" fill="#ffffff"/><rect x="4" y="15" width="8" height="4" fill="#f2c040"/><rect x="2.5" y="19" width="24" height="10.5" fill="url(#gFolder)"/><rect x="2.5" y="18.5" width="24" height="1.5" fill="#fff8d8"/></svg>
<svg class="r" style="left:3000px;top:64px;overflow:visible" width="18" height="18" viewBox="0 0 18 18"><rect x="0.5" y="5" width="7.5" height="13" fill="#1d2430"/><rect x="10" y="5" width="7.5" height="13" fill="#111"/><rect x="3" y="0" width="5" height="7" fill="#56647c"/><rect x="10" y="0" width="5" height="7" fill="#56647c"/><rect x="4" y="2" width="2" height="4" fill="#9fb4d0"/><rect x="11" y="2" width="2" height="4" fill="#9fb4d0"/><rect x="6" y="8" width="6" height="2" fill="#8aa0c0"/><rect x="2" y="11" width="3" height="6" fill="#c8d4e4"/><rect x="12" y="11" width="3" height="6" fill="#c8d4e4"/></svg>
<svg class="r" style="left:5072px;top:70px;overflow:visible" width="24" height="22" viewBox="0 0 24 22"><rect x="0" y="0" width="10" height="2" fill="#777"/><rect x="14" y="0" width="10" height="2" fill="#1a1a1a"/><rect x="0" y="4" width="10" height="2" fill="#666"/><rect x="14" y="4" width="10" height="2" fill="#1a1a1a"/><rect x="0" y="8" width="10" height="2" fill="#555"/><rect x="14" y="8" width="10" height="2" fill="#1a1a1a"/><rect x="0" y="12" width="10" height="2" fill="#444"/><rect x="14" y="12" width="10" height="2" fill="#1a1a1a"/><rect x="0" y="16" width="10" height="2" fill="#333"/><rect x="14" y="16" width="10" height="2" fill="#1a1a1a"/><rect x="0" y="20" width="10" height="2" fill="#222"/><rect x="14" y="20" width="10" height="2" fill="#1a1a1a"/></svg>
<svg class="r" style="left:32px;top:166px;overflow:visible" width="32" height="32" viewBox="0 0 32 32"><rect x="0" y="0" width="32" height="32" fill="#2c5cb8"/><rect x="30" y="0" width="2" height="2" fill="#ffffff"/><rect x="28" y="0" width="2" height="2" fill="#8fb0e4"/><rect x="2" y="2" width="28" height="28" fill="#c6d8f4"/><rect x="4" y="2" width="24" height="28" fill="#7aa4e4"/><rect x="26" y="6" width="4" height="22" fill="#a8c4ee"/><rect x="6" y="2" width="20" height="10" fill="#eef4fc"/><rect x="18" y="2" width="8" height="10" fill="#d8e6f8"/><rect x="10" y="4" width="2" height="6" fill="#3a6ac0"/><rect x="6" y="12" width="20" height="2" fill="#5a84cc"/><rect x="6" y="20" width="20" height="10" fill="#ffffff"/><rect x="8" y="22" width="16" height="2" fill="#6cb44c"/><rect x="8" y="24" width="16" height="2" fill="#c8e4c0"/><rect x="8" y="26" width="16" height="2" fill="#6cb44c"/></svg>
<svg class="r" style="left:104px;top:170px;overflow:visible" width="32" height="24" viewBox="0 0 32 24"><path d="M1 13 L5 9 L11 15 L26 1 L31 5 L11 24 Z" fill="#6cc060" stroke="#3c9a34" stroke-width="1.2" stroke-linejoin="round"/><path d="M4 12 L11 18 L27 3" fill="none" stroke="#a8e090" stroke-width="1.5"/></svg>
<svg class="r" style="left:1522px;top:170px" width="20" height="24" viewBox="0 0 10 12" shape-rendering="crispEdges"><rect x="0" y="0" width="4" height="1" fill="#2a66da"/><rect x="8" y="0" width="1" height="1" fill="#94b7ef"/><rect x="9" y="0" width="1" height="1" fill="#0b3cc9"/><rect x="0" y="1" width="1" height="1" fill="#2a66da"/><rect x="1" y="1" width="1" height="1" fill="#b4d0f4"/><rect x="2" y="1" width="1" height="1" fill="#7eacee"/><rect x="3" y="1" width="1" height="1" fill="#2a66da"/><rect x="7" y="1" width="1" height="1" fill="#94b7ef"/><rect x="8" y="1" width="1" height="1" fill="#4382e4"/><rect x="9" y="1" width="1" height="1" fill="#0b3cc9"/><rect x="0" y="2" width="1" height="1" fill="#2a66da"/><rect x="1" y="2" width="1" height="1" fill="#b4d0f4"/><rect x="2" y="2" width="1" height="1" fill="#7eacee"/><rect x="3" y="2" width="1" height="1" fill="#2a66da"/><rect x="6" y="2" width="1" height="1" fill="#94b7ef"/><rect x="7" y="2" width="1" height="1" fill="#4382e4"/><rect x="8" y="2" width="1" height="1" fill="#5b95ea"/><rect x="9" y="2" width="1" height="1" fill="#0b3cc9"/><rect x="0" y="3" width="1" height="1" fill="#2a66da"/><rect x="1" y="3" width="1" height="1" fill="#b4d0f4"/><rect x="2" y="3" width="1" height="1" fill="#7eacee"/><rect x="3" y="3" width="1" height="1" fill="#2a66da"/><rect x="5" y="3" width="1" height="1" fill="#94b7ef"/><rect x="6" y="3" width="1" height="1" fill="#4382e4"/><rect x="7" y="3" width="1" height="1" fill="#8fb3ee"/><rect x="8" y="3" width="1" height="1" fill="#5b95ea"/><rect x="9" y="3" width="1" height="1" fill="#0b3cc9"/><rect x="0" y="4" width="1" height="1" fill="#2a66da"/><rect x="1" y="4" width="1" height="1" fill="#b4d0f4"/><rect x="2" y="4" width="1" height="1" fill="#7eacee"/><rect x="3" y="4" width="1" height="1" fill="#2a66da"/><rect x="4" y="4" width="1" height="1" fill="#94b7ef"/><rect x="5" y="4" width="1" height="1" fill="#4382e4"/><rect x="6" y="4" width="2" height="1" fill="#8fb3ee"/><rect x="8" y="4" width="1" height="1" fill="#5b95ea"/><rect x="9" y="4" width="1" height="1" fill="#0b3cc9"/><rect x="0" y="5" width="1" height="1" fill="#2a66da"/><rect x="1" y="5" width="1" height="1" fill="#b4d0f4"/><rect x="2" y="5" width="1" height="1" fill="#7eacee"/><rect x="3" y="5" width="1" height="1" fill="#4382e4"/><rect x="4" y="5" width="3" height="1" fill="#8fb3ee"/><rect x="7" y="5" width="1" height="1" fill="#a3c1f1"/><rect x="8" y="5" width="1" height="1" fill="#5b95ea"/><rect x="9" y="5" width="1" height="1" fill="#0b3cc9"/><rect x="0" y="6" width="1" height="1" fill="#2a66da"/><rect x="1" y="6" width="1" height="1" fill="#b4d0f4"/><rect x="2" y="6" width="1" height="1" fill="#7eacee"/><rect x="3" y="6" width="1" height="1" fill="#4382e4"/><rect x="4" y="6" width="3" height="1" fill="#8fb3ee"/><rect x="7" y="6" width="1" height="1" fill="#a3c1f1"/><rect x="8" y="6" width="1" height="1" fill="#5b95ea"/><rect x="9" y="6" width="1" height="1" fill="#0b3cc9"/><rect x="0" y="7" width="1" height="1" fill="#2a66da"/><rect x="1" y="7" width="1" height="1" fill="#b4d0f4"/><rect x="2" y="7" width="1" height="1" fill="#7eacee"/><rect x="3" y="7" width="1" height="1" fill="#2a66da"/><rect x="4" y="7" width="1" height="1" fill="#94b7ef"/><rect x="5" y="7" width="1" height="1" fill="#4382e4"/><rect x="6" y="7" width="2" height="1" fill="#8fb3ee"/><rect x="8" y="7" width="1" height="1" fill="#5b95ea"/><rect x="9" y="7" width="1" height="1" fill="#0b3cc9"/><rect x="0" y="8" width="1" height="1" fill="#2a66da"/><rect x="1" y="8" width="1" height="1" fill="#b4d0f4"/><rect x="2" y="8" width="1" height="1" fill="#7eacee"/><rect x="3" y="8" width="1" height="1" fill="#2a66da"/><rect x="5" y="8" width="1" height="1" fill="#94b7ef"/><rect x="6" y="8" width="1" height="1" fill="#4382e4"/><rect x="7" y="8" width="1" height="1" fill="#8fb3ee"/><rect x="8" y="8" width="1" height="1" fill="#5b95ea"/><rect x="9" y="8" width="1" height="1" fill="#0b3cc9"/><rect x="0" y="9" width="1" height="1" fill="#2a66da"/><rect x="1" y="9" width="1" height="1" fill="#b4d0f4"/><rect x="2" y="9" width="1" height="1" fill="#7eacee"/><rect x="3" y="9" width="1" height="1" fill="#2a66da"/><rect x="6" y="9" width="1" height="1" fill="#94b7ef"/><rect x="7" y="9" width="1" height="1" fill="#4382e4"/><rect x="8" y="9" width="1" height="1" fill="#5b95ea"/><rect x="9" y="9" width="1" height="1" fill="#0b3cc9"/><rect x="0" y="10" width="1" height="1" fill="#2a66da"/><rect x="1" y="10" width="1" height="1" fill="#b4d0f4"/><rect x="2" y="10" width="1" height="1" fill="#7eacee"/><rect x="3" y="10" width="1" height="1" fill="#2a66da"/><rect x="7" y="10" width="1" height="1" fill="#94b7ef"/><rect x="8" y="10" width="1" height="1" fill="#4382e4"/><rect x="9" y="10" width="1" height="1" fill="#0022b2"/><rect x="0" y="11" width="4" height="1" fill="#2a66da"/><rect x="8" y="11" width="1" height="1" fill="#94b7ef"/><rect x="9" y="11" width="1" height="1" fill="#0022b2"/></svg>
<svg class="r" style="left:1580px;top:170px" width="14" height="24" viewBox="0 0 7 12" shape-rendering="crispEdges"><rect x="5" y="0" width="1" height="1" fill="#94b7ef"/><rect x="6" y="0" width="1" height="1" fill="#0b3cc9"/><rect x="4" y="1" width="1" height="1" fill="#94b7ef"/><rect x="5" y="1" width="1" height="1" fill="#4382e4"/><rect x="6" y="1" width="1" height="1" fill="#0b3cc9"/><rect x="3" y="2" width="1" height="1" fill="#94b7ef"/><rect x="4" y="2" width="1" height="1" fill="#4382e4"/><rect x="5" y="2" width="1" height="1" fill="#5b95ea"/><rect x="6" y="2" width="1" height="1" fill="#0b3cc9"/><rect x="2" y="3" width="1" height="1" fill="#94b7ef"/><rect x="3" y="3" width="1" height="1" fill="#4382e4"/><rect x="4" y="3" width="1" height="1" fill="#8fb3ee"/><rect x="5" y="3" width="1" height="1" fill="#5b95ea"/><rect x="6" y="3" width="1" height="1" fill="#0b3cc9"/><rect x="1" y="4" width="1" height="1" fill="#94b7ef"/><rect x="2" y="4" width="1" height="1" fill="#4382e4"/><rect x="3" y="4" width="2" height="1" fill="#8fb3ee"/><rect x="5" y="4" width="1" height="1" fill="#5b95ea"/><rect x="6" y="4" width="1" height="1" fill="#0b3cc9"/><rect x="0" y="5" width="1" height="1" fill="#4382e4"/><rect x="1" y="5" width="4" height="1" fill="#8fb3ee"/><rect x="5" y="5" width="1" height="1" fill="#5b95ea"/><rect x="6" y="5" width="1" height="1" fill="#0b3cc9"/><rect x="0" y="6" width="1" height="1" fill="#4382e4"/><rect x="1" y="6" width="4" height="1" fill="#8fb3ee"/><rect x="5" y="6" width="1" height="1" fill="#5b95ea"/><rect x="6" y="6" width="1" height="1" fill="#0b3cc9"/><rect x="1" y="7" width="1" height="1" fill="#94b7ef"/><rect x="2" y="7" width="1" height="1" fill="#4382e4"/><rect x="3" y="7" width="2" height="1" fill="#8fb3ee"/><rect x="5" y="7" width="1" height="1" fill="#5b95ea"/><rect x="6" y="7" width="1" height="1" fill="#0b3cc9"/><rect x="2" y="8" width="1" height="1" fill="#94b7ef"/><rect x="3" y="8" width="1" height="1" fill="#4382e4"/><rect x="4" y="8" width="1" height="1" fill="#8fb3ee"/><rect x="5" y="8" width="1" height="1" fill="#5b95ea"/><rect x="6" y="8" width="1" height="1" fill="#0b3cc9"/><rect x="3" y="9" width="1" height="1" fill="#94b7ef"/><rect x="4" y="9" width="1" height="1" fill="#4382e4"/><rect x="5" y="9" width="1" height="1" fill="#5b95ea"/><rect x="6" y="9" width="1" height="1" fill="#0b3cc9"/><rect x="4" y="10" width="1" height="1" fill="#94b7ef"/><rect x="5" y="10" width="1" height="1" fill="#4382e4"/><rect x="6" y="10" width="1" height="1" fill="#0022b2"/><rect x="5" y="11" width="1" height="1" fill="#94b7ef"/><rect x="6" y="11" width="1" height="1" fill="#0022b2"/></svg>
<svg class="r" style="left:1636px;top:170px" width="14" height="24" viewBox="0 0 7 12" shape-rendering="crispEdges"><rect x="0" y="0" width="1" height="1" fill="#0b3cc9"/><rect x="1" y="0" width="1" height="1" fill="#94b7ef"/><rect x="0" y="1" width="1" height="1" fill="#0b3cc9"/><rect x="1" y="1" width="1" height="1" fill="#4382e4"/><rect x="2" y="1" width="1" height="1" fill="#94b7ef"/><rect x="0" y="2" width="1" height="1" fill="#0b3cc9"/><rect x="1" y="2" width="1" height="1" fill="#5b95ea"/><rect x="2" y="2" width="1" height="1" fill="#4382e4"/><rect x="3" y="2" width="1" height="1" fill="#94b7ef"/><rect x="0" y="3" width="1" height="1" fill="#0b3cc9"/><rect x="1" y="3" width="1" height="1" fill="#5b95ea"/><rect x="2" y="3" width="1" height="1" fill="#8fb3ee"/><rect x="3" y="3" width="1" height="1" fill="#4382e4"/><rect x="4" y="3" width="1" height="1" fill="#94b7ef"/><rect x="0" y="4" width="1" height="1" fill="#0b3cc9"/><rect x="1" y="4" width="1" height="1" fill="#5b95ea"/><rect x="2" y="4" width="2" height="1" fill="#8fb3ee"/><rect x="4" y="4" width="1" height="1" fill="#4382e4"/><rect x="5" y="4" width="1" height="1" fill="#94b7ef"/><rect x="0" y="5" width="1" height="1" fill="#0b3cc9"/><rect x="1" y="5" width="1" height="1" fill="#5b95ea"/><rect x="2" y="5" width="4" height="1" fill="#8fb3ee"/><rect x="6" y="5" width="1" height="1" fill="#4382e4"/><rect x="0" y="6" width="1" height="1" fill="#0b3cc9"/><rect x="1" y="6" width="1" height="1" fill="#5b95ea"/><rect x="2" y="6" width="4" height="1" fill="#8fb3ee"/><rect x="6" y="6" width="1" height="1" fill="#4382e4"/><rect x="0" y="7" width="1" height="1" fill="#0b3cc9"/><rect x="1" y="7" width="1" height="1" fill="#5b95ea"/><rect x="2" y="7" width="2" height="1" fill="#8fb3ee"/><rect x="4" y="7" width="1" height="1" fill="#4382e4"/><rect x="5" y="7" width="1" height="1" fill="#94b7ef"/><rect x="0" y="8" width="1" height="1" fill="#0b3cc9"/><rect x="1" y="8" width="1" height="1" fill="#5b95ea"/><rect x="2" y="8" width="1" height="1" fill="#8fb3ee"/><rect x="3" y="8" width="1" height="1" fill="#4382e4"/><rect x="4" y="8" width="1" height="1" fill="#94b7ef"/><rect x="0" y="9" width="1" height="1" fill="#0b3cc9"/><rect x="1" y="9" width="1" height="1" fill="#5b95ea"/><rect x="2" y="9" width="1" height="1" fill="#4382e4"/><rect x="3" y="9" width="1" height="1" fill="#94b7ef"/><rect x="0" y="10" width="1" height="1" fill="#0022b2"/><rect x="1" y="10" width="1" height="1" fill="#4382e4"/><rect x="2" y="10" width="1" height="1" fill="#94b7ef"/><rect x="0" y="11" width="1" height="1" fill="#0022b2"/><rect x="1" y="11" width="1" height="1" fill="#94b7ef"/></svg>
<svg class="r" style="left:1690px;top:170px" width="20" height="24" viewBox="0 0 10 12" shape-rendering="crispEdges"><rect x="0" y="0" width="1" height="1" fill="#0b3cc9"/><rect x="1" y="0" width="1" height="1" fill="#94b7ef"/><rect x="6" y="0" width="4" height="1" fill="#2a66da"/><rect x="0" y="1" width="1" height="1" fill="#0b3cc9"/><rect x="1" y="1" width="1" height="1" fill="#4382e4"/><rect x="2" y="1" width="1" height="1" fill="#94b7ef"/><rect x="6" y="1" width="1" height="1" fill="#2a66da"/><rect x="7" y="1" width="1" height="1" fill="#7eacee"/><rect x="8" y="1" width="1" height="1" fill="#b4d0f4"/><rect x="9" y="1" width="1" height="1" fill="#2a66da"/><rect x="0" y="2" width="1" height="1" fill="#0b3cc9"/><rect x="1" y="2" width="1" height="1" fill="#5b95ea"/><rect x="2" y="2" width="1" height="1" fill="#4382e4"/><rect x="3" y="2" width="1" height="1" fill="#94b7ef"/><rect x="6" y="2" width="1" height="1" fill="#2a66da"/><rect x="7" y="2" width="1" height="1" fill="#7eacee"/><rect x="8" y="2" width="1" height="1" fill="#b4d0f4"/><rect x="9" y="2" width="1" height="1" fill="#2a66da"/><rect x="0" y="3" width="1" height="1" fill="#0b3cc9"/><rect x="1" y="3" width="1" height="1" fill="#5b95ea"/><rect x="2" y="3" width="1" height="1" fill="#8fb3ee"/><rect x="3" y="3" width="1" height="1" fill="#4382e4"/><rect x="4" y="3" width="1" height="1" fill="#94b7ef"/><rect x="6" y="3" width="1" height="1" fill="#2a66da"/><rect x="7" y="3" width="1" height="1" fill="#7eacee"/><rect x="8" y="3" width="1" height="1" fill="#b4d0f4"/><rect x="9" y="3" width="1" height="1" fill="#2a66da"/><rect x="0" y="4" width="1" height="1" fill="#0b3cc9"/><rect x="1" y="4" width="1" height="1" fill="#5b95ea"/><rect x="2" y="4" width="2" height="1" fill="#8fb3ee"/><rect x="4" y="4" width="1" height="1" fill="#4382e4"/><rect x="5" y="4" width="1" height="1" fill="#94b7ef"/><rect x="6" y="4" width="1" height="1" fill="#2a66da"/><rect x="7" y="4" width="1" height="1" fill="#7eacee"/><rect x="8" y="4" width="1" height="1" fill="#b4d0f4"/><rect x="9" y="4" width="1" height="1" fill="#2a66da"/><rect x="0" y="5" width="1" height="1" fill="#0b3cc9"/><rect x="1" y="5" width="1" height="1" fill="#5b95ea"/><rect x="2" y="5" width="1" height="1" fill="#a3c1f1"/><rect x="3" y="5" width="3" height="1" fill="#8fb3ee"/><rect x="6" y="5" width="1" height="1" fill="#4382e4"/><rect x="7" y="5" width="1" height="1" fill="#7eacee"/><rect x="8" y="5" width="1" height="1" fill="#b4d0f4"/><rect x="9" y="5" width="1" height="1" fill="#2a66da"/><rect x="0" y="6" width="1" height="1" fill="#0b3cc9"/><rect x="1" y="6" width="1" height="1" fill="#5b95ea"/><rect x="2" y="6" width="1" height="1" fill="#a3c1f1"/><rect x="3" y="6" width="3" height="1" fill="#8fb3ee"/><rect x="6" y="6" width="1" height="1" fill="#4382e4"/><rect x="7" y="6" width="1" height="1" fill="#7eacee"/><rect x="8" y="6" width="1" height="1" fill="#b4d0f4"/><rect x="9" y="6" width="1" height="1" fill="#2a66da"/><rect x="0" y="7" width="1" height="1" fill="#0b3cc9"/><rect x="1" y="7" width="1" height="1" fill="#5b95ea"/><rect x="2" y="7" width="2" height="1" fill="#8fb3ee"/><rect x="4" y="7" width="1" height="1" fill="#4382e4"/><rect x="5" y="7" width="1" height="1" fill="#94b7ef"/><rect x="6" y="7" width="1" height="1" fill="#2a66da"/><rect x="7" y="7" width="1" height="1" fill="#7eacee"/><rect x="8" y="7" width="1" height="1" fill="#b4d0f4"/><rect x="9" y="7" width="1" height="1" fill="#2a66da"/><rect x="0" y="8" width="1" height="1" fill="#0b3cc9"/><rect x="1" y="8" width="1" height="1" fill="#5b95ea"/><rect x="2" y="8" width="1" height="1" fill="#8fb3ee"/><rect x="3" y="8" width="1" height="1" fill="#4382e4"/><rect x="4" y="8" width="1" height="1" fill="#94b7ef"/><rect x="6" y="8" width="1" height="1" fill="#2a66da"/><rect x="7" y="8" width="1" height="1" fill="#7eacee"/><rect x="8" y="8" width="1" height="1" fill="#b4d0f4"/><rect x="9" y="8" width="1" height="1" fill="#2a66da"/><rect x="0" y="9" width="1" height="1" fill="#0b3cc9"/><rect x="1" y="9" width="1" height="1" fill="#5b95ea"/><rect x="2" y="9" width="1" height="1" fill="#4382e4"/><rect x="3" y="9" width="1" height="1" fill="#94b7ef"/><rect x="6" y="9" width="1" height="1" fill="#2a66da"/><rect x="7" y="9" width="1" height="1" fill="#7eacee"/><rect x="8" y="9" width="1" height="1" fill="#b4d0f4"/><rect x="9" y="9" width="1" height="1" fill="#2a66da"/><rect x="0" y="10" width="1" height="1" fill="#0022b2"/><rect x="1" y="10" width="1" height="1" fill="#4382e4"/><rect x="2" y="10" width="1" height="1" fill="#94b7ef"/><rect x="6" y="10" width="1" height="1" fill="#2a66da"/><rect x="7" y="10" width="1" height="1" fill="#7eacee"/><rect x="8" y="10" width="1" height="1" fill="#b4d0f4"/><rect x="9" y="10" width="1" height="1" fill="#2a66da"/><rect x="0" y="11" width="1" height="1" fill="#0022b2"/><rect x="1" y="11" width="1" height="1" fill="#94b7ef"/><rect x="6" y="11" width="4" height="1" fill="#2a66da"/></svg>
<svg class="r" style="left:1744px;top:168px;overflow:visible" width="24" height="28" viewBox="0 0 24 28"><rect x="0" y="0" width="24" height="4" fill="#58b8e8"/><rect x="3" y="1" width="18" height="1.5" fill="#a8e4fa"/><path d="M0 4 H24 L14 15 V28 H10 V15 Z" fill="#8a8a8a"/><path d="M10 6 H14 V28 H10 Z" fill="#e6e6e6"/><path d="M4 5 L10 12 V6 Z" fill="#5a5a5a"/></svg>
<svg class="r" style="left:1846px;top:168px;overflow:visible" width="26" height="27" viewBox="0 0 26 27"><circle cx="10" cy="10" r="9.5" fill="#c9ddf6" stroke="#9fbfe9" stroke-width="1.5"/><circle cx="8" cy="8" r="5" fill="#dfeafa"/><path d="M15 17 L22.5 25" stroke="#a8733e" stroke-width="6" stroke-linecap="square"/><path d="M15 17 L22.5 25" stroke="#d8aa78" stroke-width="2" stroke-dasharray="2 2"/><rect x="12" y="8" width="14" height="6" fill="#e42c2c"/><rect x="14" y="10" width="10" height="2" fill="#f0b8a0"/></svg>
<svg class="r" style="left:1902px;top:168px;overflow:visible" width="26" height="27" viewBox="0 0 26 27"><circle cx="10" cy="10" r="9.5" fill="#c9ddf6" stroke="#9fbfe9" stroke-width="1.5"/><circle cx="8" cy="8" r="5" fill="#dfeafa"/><path d="M15 17 L22.5 25" stroke="#a8733e" stroke-width="6" stroke-linecap="square"/><path d="M15 17 L22.5 25" stroke="#d8aa78" stroke-width="2" stroke-dasharray="2 2"/><rect x="12" y="9.5" width="14" height="6" fill="#2f8a28"/><rect x="16" y="5" width="6" height="15" fill="#2f8a28"/><rect x="14" y="11.5" width="10" height="2" fill="#8ccf78"/><rect x="18" y="7" width="2" height="11" fill="#8ccf78"/></svg>
<svg class="r" style="left:1960px;top:166px;overflow:visible" width="32" height="30" viewBox="0 0 32 30"><path d="M6 27 C1 24 1 18 5 14 L14 6 C18 3 23 4 25 8 C27 12 26 16 22 19 L13 27 C11 29 8 29 6 27 Z" fill="#f4f4f4" stroke="#c4c4c4" stroke-width="1.5"/><path d="M25 8 C27 12 26 16 22 19 L13 27 C11 29 9 29 7 28" fill="none" stroke="#7a7a7a" stroke-width="1.6"/><path d="M10 10 L20 20" stroke="#cfcfcf" stroke-width="1"/><path d="M24 6 L30 1" stroke="#bbb" stroke-width="1.5"/><path d="M3 22 C3 25 5 27 7 28" stroke="#e08080" stroke-width="1.3" fill="none"/></svg>
<svg class="r" style="left:2028px;top:168px;overflow:visible" width="17" height="26" viewBox="0 0 17 26"><path d="M6 0 H16 V26 H12.5 V3 H10.5 V26 H7 V12 C2 12 0 9 0 6 C0 2 2 0 6 0 Z" fill="#6aaaf0"/><rect x="13" y="1" width="1.5" height="24" fill="#b8dafc"/></svg>
<svg class="r" style="left:2080px;top:170px;overflow:visible" width="30" height="30" viewBox="0 0 30 30"><rect x="1" y="1" width="23" height="23" fill="url(#gSticky)" stroke="#e8962a" stroke-width="2"/><rect x="3" y="3" width="19" height="4" fill="#fff4d8"/><path d="M5 20 L10 15 M6 15 H10 V19" stroke="#e8962a" stroke-width="1.5" fill="none"/><circle cx="21" cy="21" r="7" fill="#3f8f2c" stroke="#2a6a1c" stroke-width="1"/><circle cx="21" cy="21" r="5" fill="#7cc35e"/><rect x="17" y="19.5" width="8" height="3" fill="#fff"/><rect x="19.5" y="17" width="3" height="8" fill="#fff"/></svg>
<svg class="r" style="left:2129px;top:158px;overflow:visible" width="2" height="44" viewBox="0 0 2 44"><rect x="0" y="0" width="2" height="2" fill="#555"/><rect x="0" y="6" width="2" height="2" fill="#555"/><rect x="0" y="12" width="2" height="2" fill="#555"/><rect x="0" y="18" width="2" height="2" fill="#555"/><rect x="0" y="24" width="2" height="2" fill="#555"/><rect x="0" y="30" width="2" height="2" fill="#555"/><rect x="0" y="36" width="2" height="2" fill="#555"/><rect x="0" y="42" width="2" height="2" fill="#555"/></svg>
<svg class="r" style="left:2148px;top:166px;overflow:visible" width="32" height="30" viewBox="0 0 32 30"><path d="M1 12 L15 6 L31 12 V24 L15 30 L1 24 Z" fill="#f2f2f2" stroke="#b8b8b8" stroke-width="1.2"/><path d="M1 12 L15 18 L31 12 M15 18 V30" stroke="#c8c8c8" stroke-width="1" fill="none"/><ellipse cx="15" cy="4.5" rx="6" ry="3" fill="#fafafa" stroke="#bdbdbd" stroke-width="1"/><rect x="9" y="4.5" width="12" height="5" fill="#fafafa"/><path d="M9 4.5 V9.5 M21 4.5 V9.5" stroke="#bdbdbd" stroke-width="1"/><ellipse cx="8" cy="11" rx="4" ry="2" fill="#fafafa" stroke="#c4c4c4" stroke-width="1"/><ellipse cx="23" cy="11" rx="4" ry="2" fill="#fafafa" stroke="#c4c4c4" stroke-width="1"/><circle cx="25" cy="24.5" r="7" fill="#3f8f2c" stroke="#2a6a1c" stroke-width="1"/><circle cx="25" cy="24.5" r="5" fill="#7cc35e"/><rect x="21" y="23.0" width="8" height="3" fill="#fff"/><rect x="23.5" y="20.5" width="3" height="8" fill="#fff"/></svg>
<svg class="r" style="left:2254px;top:155px;overflow:visible" width="55" height="54" viewBox="0 0 55 54"><rect x="0" y="0" width="55" height="54" fill="url(#gCubeBtn)"/><rect x="0" y="4" width="1.5" height="46" fill="#8a8a8a" opacity="0.7"/><rect x="53.5" y="4" width="1.5" height="46" fill="#8a8a8a" opacity="0.7"/></svg>
<svg class="r" style="left:2268px;top:168px;overflow:visible" width="33" height="31" viewBox="0 0 33 31"><path d="M1 10 L9 6 L17 10 V22 L9 26 L1 22 Z" fill="#8cc07a" stroke="#5a9a4a" stroke-width="1"/><path d="M15 14 L24 10 L33 14 V26 L24 31 L15 26 Z" fill="#6f9fd8" stroke="#4a78b8" stroke-width="1"/><path d="M17 16 L24 19 V29" stroke="#b8d4f4" stroke-width="1.2" fill="none"/><path d="M9 4 L18 0 L28 4 V15 L18 19 L9 15 Z" fill="#ee6a6a" stroke="#c84444" stroke-width="1"/><path d="M11 6 L18 9 V17" stroke="#ffb8b8" stroke-width="1.2" fill="none"/></svg>
<svg class="r" style="left:1858px;top:950px" width="32" height="26" viewBox="0 0 16 13" shape-rendering="crispEdges"><rect x="4" y="0" width="8" height="1" fill="#c2c2c2"/><rect x="2" y="1" width="2" height="1" fill="#c2c2c2"/><rect x="4" y="1" width="8" height="1" fill="#ededed"/><rect x="12" y="1" width="2" height="1" fill="#c2c2c2"/><rect x="1" y="2" width="1" height="1" fill="#c2c2c2"/><rect x="2" y="2" width="2" height="1" fill="#ededed"/><rect x="4" y="2" width="8" height="1" fill="#c4866a"/><rect x="12" y="2" width="2" height="1" fill="#ededed"/><rect x="14" y="2" width="1" height="1" fill="#c2c2c2"/><rect x="1" y="3" width="1" height="1" fill="#c2c2c2"/><rect x="2" y="3" width="1" height="1" fill="#ededed"/><rect x="3" y="3" width="10" height="1" fill="#974826"/><rect x="13" y="3" width="1" height="1" fill="#ededed"/><rect x="14" y="3" width="1" height="1" fill="#c2c2c2"/><rect x="1" y="4" width="1" height="1" fill="#c2c2c2"/><rect x="2" y="4" width="2" height="1" fill="#ededed"/><rect x="4" y="4" width="8" height="1" fill="#c4866a"/><rect x="12" y="4" width="2" height="1" fill="#ededed"/><rect x="14" y="4" width="1" height="1" fill="#c2c2c2"/><rect x="1" y="5" width="1" height="1" fill="#c2c2c2"/><rect x="2" y="5" width="1" height="1" fill="#ededed"/><rect x="3" y="5" width="4" height="1" fill="#f7f7f7"/><rect x="7" y="5" width="7" height="1" fill="#ededed"/><rect x="14" y="5" width="1" height="1" fill="#c2c2c2"/><rect x="1" y="6" width="1" height="1" fill="#c2c2c2"/><rect x="2" y="6" width="2" height="1" fill="#f7f7f7"/><rect x="4" y="6" width="9" height="1" fill="#e1e1e1"/><rect x="13" y="6" width="1" height="1" fill="#ededed"/><rect x="14" y="6" width="1" height="1" fill="#c2c2c2"/><rect x="1" y="7" width="1" height="1" fill="#8a8a8a"/><rect x="2" y="7" width="1" height="1" fill="#f7f7f7"/><rect x="3" y="7" width="9" height="1" fill="#e1e1e1"/><rect x="12" y="7" width="1" height="1" fill="#cdcdcd"/><rect x="13" y="7" width="1" height="1" fill="#ededed"/><rect x="14" y="7" width="1" height="1" fill="#c2c2c2"/><rect x="2" y="8" width="1" height="1" fill="#c2c2c2"/><rect x="3" y="8" width="1" height="1" fill="#f7f7f7"/><rect x="4" y="8" width="8" height="1" fill="#e1e1e1"/><rect x="12" y="8" width="1" height="1" fill="#cdcdcd"/><rect x="13" y="8" width="1" height="1" fill="#c2c2c2"/><rect x="2" y="9" width="1" height="1" fill="#8a8a8a"/><rect x="3" y="9" width="1" height="1" fill="#c2c2c2"/><rect x="4" y="9" width="8" height="1" fill="#e1e1e1"/><rect x="12" y="9" width="2" height="1" fill="#c2c2c2"/><rect x="3" y="10" width="1" height="1" fill="#8a8a8a"/><rect x="4" y="10" width="1" height="1" fill="#c2c2c2"/><rect x="5" y="10" width="1" height="1" fill="#ededed"/><rect x="6" y="10" width="4" height="1" fill="#e1e1e1"/><rect x="10" y="10" width="2" height="1" fill="#ededed"/><rect x="12" y="10" width="1" height="1" fill="#c2c2c2"/><rect x="4" y="11" width="2" height="1" fill="#c2c2c2"/><rect x="6" y="11" width="1" height="1" fill="#ededed"/><rect x="7" y="11" width="3" height="1" fill="#f7f7f7"/><rect x="10" y="11" width="1" height="1" fill="#ededed"/><rect x="11" y="11" width="2" height="1" fill="#c2c2c2"/><rect x="6" y="12" width="6" height="1" fill="#c2c2c2"/></svg>
<svg class="r" style="left:1858px;top:950px;overflow:visible" width="34" height="30" viewBox="0 0 34 30"><path d="M12 14 H21 V9 L31 19 L21 29 V24 H12 Z" fill="url(#gGreenArrow)" stroke="#2f8a22" stroke-width="1.6"/></svg>
<svg class="r" style="left:1984px;top:948px;overflow:visible" width="32" height="28" viewBox="0 0 32 28"><rect x="10" y="2" width="22" height="3" fill="#6f9fd6"/><rect x="12" y="0" width="12" height="2" fill="#e2ecf7"/><rect x="10" y="2" width="3" height="24" fill="#5a8fcf"/><rect x="10" y="20" width="22" height="6" fill="#2f64a8"/><rect x="12" y="22" width="20" height="2" fill="#6f9fd6"/><rect x="22" y="26" width="8" height="2" fill="#3a6aa8"/><rect x="13" y="5" width="18" height="15" fill="#ffffff"/><rect x="23" y="6" width="3" height="14" fill="#a8a8a8"/><rect x="15" y="6" width="6" height="2" fill="#c4c4c4"/><rect x="30" y="7" width="2" height="2" fill="#bbb"/><rect x="30" y="11" width="2" height="2" fill="#bbb"/><rect x="30" y="15" width="2" height="2" fill="#bbb"/><path d="M0 12 L6 6 H7 V8 H23 V16 H7 V18 H6 Z" fill="#6cc05a"/><rect x="5" y="10" width="17" height="4" fill="#aedc9e"/><rect x="20" y="8" width="3" height="8" fill="#2a7a1c"/></svg>
<svg class="r" style="left:2040px;top:948px;overflow:visible" width="32" height="28" viewBox="0 0 32 28"><g transform="translate(32,0) scale(-1,1)"><rect x="10" y="2" width="22" height="3" fill="#6f9fd6"/><rect x="12" y="0" width="12" height="2" fill="#e2ecf7"/><rect x="10" y="2" width="3" height="24" fill="#5a8fcf"/><rect x="10" y="20" width="22" height="6" fill="#2f64a8"/><rect x="12" y="22" width="20" height="2" fill="#6f9fd6"/><rect x="22" y="26" width="8" height="2" fill="#3a6aa8"/><rect x="13" y="5" width="18" height="15" fill="#ffffff"/><rect x="23" y="6" width="3" height="14" fill="#a8a8a8"/><rect x="15" y="6" width="6" height="2" fill="#c4c4c4"/><rect x="30" y="7" width="2" height="2" fill="#bbb"/><rect x="30" y="11" width="2" height="2" fill="#bbb"/><rect x="30" y="15" width="2" height="2" fill="#bbb"/><path d="M0 12 L6 6 H7 V8 H23 V16 H7 V18 H6 Z" fill="#6cc05a"/><rect x="5" y="10" width="17" height="4" fill="#aedc9e"/><rect x="20" y="8" width="3" height="8" fill="#2a7a1c"/></g></svg>
<svg class="r" style="left:2098px;top:950px;overflow:visible" width="30" height="28" viewBox="0 0 30 28"><rect x="1" y="5" width="22" height="10" rx="5" fill="none" stroke="#8a8a8a" stroke-width="2.5"/><rect x="6" y="8" width="12" height="4" fill="#d8d8d8"/><path d="M10 15 H20 V10 L30 18 L20 26 V21 H10 Z" fill="url(#gGreenArrow)" stroke="#2f8a22" stroke-width="1.2"/></svg>
<svg class="r" style="left:2152px;top:948px;overflow:visible" width="32" height="31" viewBox="0 0 32 31"><path d="M13 31 V18 C9 16 7 13 7 9 H2 L8 0 L14 9 H10 C10 12 12 14 16 15 C20 14 22 12 22 9 H18 L24 0 L30 9 H25 C25 13 23 16 19 18 V31 Z" fill="url(#gGreenV)" stroke="#3a8a2a" stroke-width="1"/></svg>
<svg class="r" style="left:2205px;top:944px;overflow:visible" width="2" height="40" viewBox="0 0 2 40"><rect x="0" y="0" width="2" height="2" fill="#555"/><rect x="0" y="6" width="2" height="2" fill="#555"/><rect x="0" y="12" width="2" height="2" fill="#555"/><rect x="0" y="18" width="2" height="2" fill="#555"/><rect x="0" y="24" width="2" height="2" fill="#555"/><rect x="0" y="30" width="2" height="2" fill="#555"/><rect x="0" y="36" width="2" height="2" fill="#555"/></svg>
<svg class="r" style="left:2229px;top:947px;overflow:visible" width="33" height="32" viewBox="0 0 33 32"><path d="M2 16 C2 8 8 5 16 5 H22 V1 L31 8 L22 15 V11 H15 C10 11 8 13 7 16 Z" fill="url(#gGreenArrow)" stroke="#3a9a2a" stroke-width="1"/><path d="M31 16 C31 24 25 27 17 27 H11 V31 L2 24 L11 17 V21 H18 C23 21 25 19 26 16 Z" fill="url(#gGreenArrow)" stroke="#3a9a2a" stroke-width="1"/></svg>
<svg class="r" style="left:2288px;top:948px;overflow:visible" width="28" height="28" viewBox="0 0 28 28"><rect x="1" y="1" width="26" height="26" fill="#ffffff" stroke="#6f9fe0" stroke-width="2"/><rect x="4" y="4" width="20" height="2" fill="#6cc06a"/><rect x="4" y="8" width="20" height="17" fill="#a9c6ec"/><rect x="6" y="10" width="2" height="2" fill="#fff"/><rect x="10" y="10" width="6" height="2" fill="#fff"/><rect x="18" y="10" width="6" height="2" fill="#fff"/><rect x="6" y="14" width="2" height="2" fill="#fff"/><rect x="10" y="14" width="6" height="2" fill="#fff"/><rect x="18" y="14" width="6" height="2" fill="#fff"/><rect x="6" y="18" width="2" height="2" fill="#fff"/><rect x="10" y="18" width="6" height="2" fill="#fff"/><rect x="18" y="18" width="6" height="2" fill="#fff"/><rect x="6" y="22" width="2" height="2" fill="#fff"/><rect x="10" y="22" width="6" height="2" fill="#fff"/><rect x="18" y="22" width="6" height="2" fill="#fff"/><circle cx="24" cy="24" r="7" fill="#3f8f2c" stroke="#2a6a1c" stroke-width="1"/><circle cx="24" cy="24" r="5" fill="#7cc35e"/><rect x="20" y="22.5" width="8" height="3" fill="#fff"/><rect x="22.5" y="20" width="3" height="8" fill="#fff"/></svg>
<svg class="r" style="left:2350px;top:948px" width="16" height="28" viewBox="0 0 8 14" shape-rendering="crispEdges"><rect x="2" y="0" width="4" height="1" fill="#62b452"/><rect x="2" y="1" width="1" height="1" fill="#62b452"/><rect x="3" y="1" width="1" height="1" fill="#b8e4aa"/><rect x="4" y="1" width="1" height="1" fill="#86c874"/><rect x="5" y="1" width="1" height="1" fill="#3f9434"/><rect x="2" y="2" width="1" height="1" fill="#62b452"/><rect x="3" y="2" width="1" height="1" fill="#b8e4aa"/><rect x="4" y="2" width="1" height="1" fill="#86c874"/><rect x="5" y="2" width="1" height="1" fill="#3f9434"/><rect x="2" y="3" width="1" height="1" fill="#62b452"/><rect x="3" y="3" width="1" height="1" fill="#b8e4aa"/><rect x="4" y="3" width="1" height="1" fill="#86c874"/><rect x="5" y="3" width="1" height="1" fill="#3f9434"/><rect x="2" y="4" width="1" height="1" fill="#62b452"/><rect x="3" y="4" width="1" height="1" fill="#b8e4aa"/><rect x="4" y="4" width="1" height="1" fill="#86c874"/><rect x="5" y="4" width="1" height="1" fill="#3f9434"/><rect x="2" y="5" width="1" height="1" fill="#62b452"/><rect x="3" y="5" width="1" height="1" fill="#b8e4aa"/><rect x="4" y="5" width="1" height="1" fill="#86c874"/><rect x="5" y="5" width="1" height="1" fill="#3f9434"/><rect x="2" y="6" width="1" height="1" fill="#62b452"/><rect x="3" y="6" width="1" height="1" fill="#b8e4aa"/><rect x="4" y="6" width="1" height="1" fill="#86c874"/><rect x="5" y="6" width="1" height="1" fill="#3f9434"/><rect x="2" y="7" width="1" height="1" fill="#62b452"/><rect x="3" y="7" width="1" height="1" fill="#b8e4aa"/><rect x="4" y="7" width="1" height="1" fill="#86c874"/><rect x="5" y="7" width="1" height="1" fill="#3f9434"/><rect x="2" y="8" width="1" height="1" fill="#62b452"/><rect x="3" y="8" width="1" height="1" fill="#b8e4aa"/><rect x="4" y="8" width="1" height="1" fill="#86c874"/><rect x="5" y="8" width="1" height="1" fill="#3f9434"/><rect x="2" y="9" width="1" height="1" fill="#62b452"/><rect x="3" y="9" width="1" height="1" fill="#b8e4aa"/><rect x="4" y="9" width="1" height="1" fill="#86c874"/><rect x="5" y="9" width="1" height="1" fill="#3f9434"/><rect x="0" y="10" width="1" height="1" fill="#62b452"/><rect x="1" y="10" width="1" height="1" fill="#4ea442"/><rect x="2" y="10" width="1" height="1" fill="#62b452"/><rect x="3" y="10" width="1" height="1" fill="#b8e4aa"/><rect x="4" y="10" width="1" height="1" fill="#86c874"/><rect x="5" y="10" width="1" height="1" fill="#3f9434"/><rect x="6" y="10" width="1" height="1" fill="#4ea442"/><rect x="7" y="10" width="1" height="1" fill="#3f9434"/><rect x="1" y="11" width="1" height="1" fill="#62b452"/><rect x="2" y="11" width="1" height="1" fill="#4ea442"/><rect x="3" y="11" width="2" height="1" fill="#86c874"/><rect x="5" y="11" width="1" height="1" fill="#4ea442"/><rect x="6" y="11" width="1" height="1" fill="#62b452"/><rect x="2" y="12" width="1" height="1" fill="#62b452"/><rect x="3" y="12" width="2" height="1" fill="#4ea442"/><rect x="5" y="12" width="1" height="1" fill="#62b452"/><rect x="3" y="13" width="2" height="1" fill="#4ea442"/></svg>
<svg class="r" style="left:2398px;top:950px" width="32" height="26" viewBox="0 0 16 13" shape-rendering="crispEdges"><rect x="4" y="0" width="8" height="1" fill="#c2c2c2"/><rect x="2" y="1" width="2" height="1" fill="#c2c2c2"/><rect x="4" y="1" width="8" height="1" fill="#ededed"/><rect x="12" y="1" width="2" height="1" fill="#c2c2c2"/><rect x="1" y="2" width="1" height="1" fill="#c2c2c2"/><rect x="2" y="2" width="2" height="1" fill="#ededed"/><rect x="4" y="2" width="8" height="1" fill="#c4866a"/><rect x="12" y="2" width="2" height="1" fill="#ededed"/><rect x="14" y="2" width="1" height="1" fill="#c2c2c2"/><rect x="1" y="3" width="1" height="1" fill="#c2c2c2"/><rect x="2" y="3" width="1" height="1" fill="#ededed"/><rect x="3" y="3" width="10" height="1" fill="#974826"/><rect x="13" y="3" width="1" height="1" fill="#ededed"/><rect x="14" y="3" width="1" height="1" fill="#c2c2c2"/><rect x="1" y="4" width="1" height="1" fill="#c2c2c2"/><rect x="2" y="4" width="2" height="1" fill="#ededed"/><rect x="4" y="4" width="8" height="1" fill="#c4866a"/><rect x="12" y="4" width="2" height="1" fill="#ededed"/><rect x="14" y="4" width="1" height="1" fill="#c2c2c2"/><rect x="1" y="5" width="1" height="1" fill="#c2c2c2"/><rect x="2" y="5" width="1" height="1" fill="#ededed"/><rect x="3" y="5" width="4" height="1" fill="#f7f7f7"/><rect x="7" y="5" width="7" height="1" fill="#ededed"/><rect x="14" y="5" width="1" height="1" fill="#c2c2c2"/><rect x="1" y="6" width="1" height="1" fill="#c2c2c2"/><rect x="2" y="6" width="2" height="1" fill="#f7f7f7"/><rect x="4" y="6" width="9" height="1" fill="#e1e1e1"/><rect x="13" y="6" width="1" height="1" fill="#ededed"/><rect x="14" y="6" width="1" height="1" fill="#c2c2c2"/><rect x="1" y="7" width="1" height="1" fill="#8a8a8a"/><rect x="2" y="7" width="1" height="1" fill="#f7f7f7"/><rect x="3" y="7" width="9" height="1" fill="#e1e1e1"/><rect x="12" y="7" width="1" height="1" fill="#cdcdcd"/><rect x="13" y="7" width="1" height="1" fill="#ededed"/><rect x="14" y="7" width="1" height="1" fill="#c2c2c2"/><rect x="2" y="8" width="1" height="1" fill="#c2c2c2"/><rect x="3" y="8" width="1" height="1" fill="#f7f7f7"/><rect x="4" y="8" width="8" height="1" fill="#e1e1e1"/><rect x="12" y="8" width="1" height="1" fill="#cdcdcd"/><rect x="13" y="8" width="1" height="1" fill="#c2c2c2"/><rect x="2" y="9" width="1" height="1" fill="#8a8a8a"/><rect x="3" y="9" width="1" height="1" fill="#c2c2c2"/><rect x="4" y="9" width="8" height="1" fill="#e1e1e1"/><rect x="12" y="9" width="2" height="1" fill="#c2c2c2"/><rect x="3" y="10" width="1" height="1" fill="#8a8a8a"/><rect x="4" y="10" width="1" height="1" fill="#c2c2c2"/><rect x="5" y="10" width="1" height="1" fill="#ededed"/><rect x="6" y="10" width="4" height="1" fill="#e1e1e1"/><rect x="10" y="10" width="2" height="1" fill="#ededed"/><rect x="12" y="10" width="1" height="1" fill="#c2c2c2"/><rect x="4" y="11" width="2" height="1" fill="#c2c2c2"/><rect x="6" y="11" width="1" height="1" fill="#ededed"/><rect x="7" y="11" width="3" height="1" fill="#f7f7f7"/><rect x="10" y="11" width="1" height="1" fill="#ededed"/><rect x="11" y="11" width="2" height="1" fill="#c2c2c2"/><rect x="6" y="12" width="6" height="1" fill="#c2c2c2"/></svg>
<svg class="r" style="left:2398px;top:950px;overflow:visible" width="34" height="30" viewBox="0 0 34 30"><circle cx="25" cy="23" r="7" fill="#3f8f2c" stroke="#2a6a1c" stroke-width="1"/><circle cx="25" cy="23" r="5" fill="#7cc35e"/><rect x="21" y="21.5" width="8" height="3" fill="#fff"/><rect x="23.5" y="19" width="3" height="8" fill="#fff"/></svg>
<svg class="r" style="left:2456px;top:951px;overflow:visible" width="27" height="28" viewBox="0 0 27 28"><rect x="1" y="1" width="25" height="25.5" rx="5" fill="url(#gCheckbox)" stroke="#8c8c8c" stroke-width="1.3"/></svg>
<svg class="r" style="left:2563px;top:944px;overflow:visible" width="2" height="40" viewBox="0 0 2 40"><rect x="0" y="0" width="2" height="2" fill="#555"/><rect x="0" y="6" width="2" height="2" fill="#555"/><rect x="0" y="12" width="2" height="2" fill="#555"/><rect x="0" y="18" width="2" height="2" fill="#555"/><rect x="0" y="24" width="2" height="2" fill="#555"/><rect x="0" y="30" width="2" height="2" fill="#555"/><rect x="0" y="36" width="2" height="2" fill="#555"/></svg>
<svg class="r" style="left:2591px;top:946px;overflow:visible" width="26" height="34" viewBox="0 0 26 34"><path d="M12 0 V22" stroke="#b8d0ec" stroke-width="3"/><path d="M24 4 L12 20" stroke="#a8c4e4" stroke-width="3"/><ellipse cx="6" cy="24" rx="6" ry="5" fill="#5a9ae0" stroke="#2f6ab8" stroke-width="1"/><circle cx="5.5" cy="24" r="2" fill="#fff"/><ellipse cx="15" cy="29" rx="5" ry="5" fill="#4a88d8" stroke="#2f6ab8" stroke-width="1"/><circle cx="15" cy="28.5" r="2" fill="#fff"/></svg>
<svg class="r" style="left:2643px;top:946px;overflow:visible" width="34" height="33" viewBox="0 0 34 33"><path d="M1 1 H16 L20 5 V23 H1 Z" fill="#f6f6f6" stroke="#c4c4c4" stroke-width="1.5"/><path d="M13 9 H28 L32 13 V32 H13 Z" fill="#f8f8f8" stroke="#c4c4c4" stroke-width="1.5"/></svg>
<svg class="r" style="left:2700px;top:946px;overflow:visible" width="33" height="33" viewBox="0 0 33 33"><rect x="1" y="4" width="23" height="27" rx="1.5" fill="url(#gClip)" stroke="#8a5a20" stroke-width="1.3"/><rect x="7" y="1" width="11" height="6" fill="#f2d26a" stroke="#8a5a20" stroke-width="1.2"/><rect x="13" y="13" width="19" height="19" fill="#f4f4f4" stroke="#9a9a9a" stroke-width="1.5"/><rect x="16" y="17" width="13" height="2" fill="#a8a8a8"/><rect x="16" y="21" width="13" height="2" fill="#a8a8a8"/><rect x="16" y="25" width="13" height="2" fill="#a8a8a8"/></svg>
<svg class="r" style="left:2759px;top:955px;overflow:visible" width="26" height="16" viewBox="0 0 26 16"><path d="M9 0 L1 7 L9 14" stroke="#4f94ec" stroke-width="3.5" fill="none" stroke-linejoin="miter"/><path d="M17 0 L25 7 L17 14" stroke="#4f94ec" stroke-width="3.5" fill="none" stroke-linejoin="miter"/></svg>
<svg class="r" style="left:1328px;top:1482px" width="16" height="28" viewBox="0 0 8 14" shape-rendering="crispEdges"><rect x="2" y="0" width="4" height="1" fill="#62b452"/><rect x="2" y="1" width="1" height="1" fill="#62b452"/><rect x="3" y="1" width="1" height="1" fill="#b8e4aa"/><rect x="4" y="1" width="1" height="1" fill="#86c874"/><rect x="5" y="1" width="1" height="1" fill="#3f9434"/><rect x="2" y="2" width="1" height="1" fill="#62b452"/><rect x="3" y="2" width="1" height="1" fill="#b8e4aa"/><rect x="4" y="2" width="1" height="1" fill="#86c874"/><rect x="5" y="2" width="1" height="1" fill="#3f9434"/><rect x="2" y="3" width="1" height="1" fill="#62b452"/><rect x="3" y="3" width="1" height="1" fill="#b8e4aa"/><rect x="4" y="3" width="1" height="1" fill="#86c874"/><rect x="5" y="3" width="1" height="1" fill="#3f9434"/><rect x="2" y="4" width="1" height="1" fill="#62b452"/><rect x="3" y="4" width="1" height="1" fill="#b8e4aa"/><rect x="4" y="4" width="1" height="1" fill="#86c874"/><rect x="5" y="4" width="1" height="1" fill="#3f9434"/><rect x="2" y="5" width="1" height="1" fill="#62b452"/><rect x="3" y="5" width="1" height="1" fill="#b8e4aa"/><rect x="4" y="5" width="1" height="1" fill="#86c874"/><rect x="5" y="5" width="1" height="1" fill="#3f9434"/><rect x="2" y="6" width="1" height="1" fill="#62b452"/><rect x="3" y="6" width="1" height="1" fill="#b8e4aa"/><rect x="4" y="6" width="1" height="1" fill="#86c874"/><rect x="5" y="6" width="1" height="1" fill="#3f9434"/><rect x="2" y="7" width="1" height="1" fill="#62b452"/><rect x="3" y="7" width="1" height="1" fill="#b8e4aa"/><rect x="4" y="7" width="1" height="1" fill="#86c874"/><rect x="5" y="7" width="1" height="1" fill="#3f9434"/><rect x="2" y="8" width="1" height="1" fill="#62b452"/><rect x="3" y="8" width="1" height="1" fill="#b8e4aa"/><rect x="4" y="8" width="1" height="1" fill="#86c874"/><rect x="5" y="8" width="1" height="1" fill="#3f9434"/><rect x="2" y="9" width="1" height="1" fill="#62b452"/><rect x="3" y="9" width="1" height="1" fill="#b8e4aa"/><rect x="4" y="9" width="1" height="1" fill="#86c874"/><rect x="5" y="9" width="1" height="1" fill="#3f9434"/><rect x="0" y="10" width="1" height="1" fill="#62b452"/><rect x="1" y="10" width="1" height="1" fill="#4ea442"/><rect x="2" y="10" width="1" height="1" fill="#62b452"/><rect x="3" y="10" width="1" height="1" fill="#b8e4aa"/><rect x="4" y="10" width="1" height="1" fill="#86c874"/><rect x="5" y="10" width="1" height="1" fill="#3f9434"/><rect x="6" y="10" width="1" height="1" fill="#4ea442"/><rect x="7" y="10" width="1" height="1" fill="#3f9434"/><rect x="1" y="11" width="1" height="1" fill="#62b452"/><rect x="2" y="11" width="1" height="1" fill="#4ea442"/><rect x="3" y="11" width="2" height="1" fill="#86c874"/><rect x="5" y="11" width="1" height="1" fill="#4ea442"/><rect x="6" y="11" width="1" height="1" fill="#62b452"/><rect x="2" y="12" width="1" height="1" fill="#62b452"/><rect x="3" y="12" width="2" height="1" fill="#4ea442"/><rect x="5" y="12" width="1" height="1" fill="#62b452"/><rect x="3" y="13" width="2" height="1" fill="#4ea442"/></svg>
</body></html>
